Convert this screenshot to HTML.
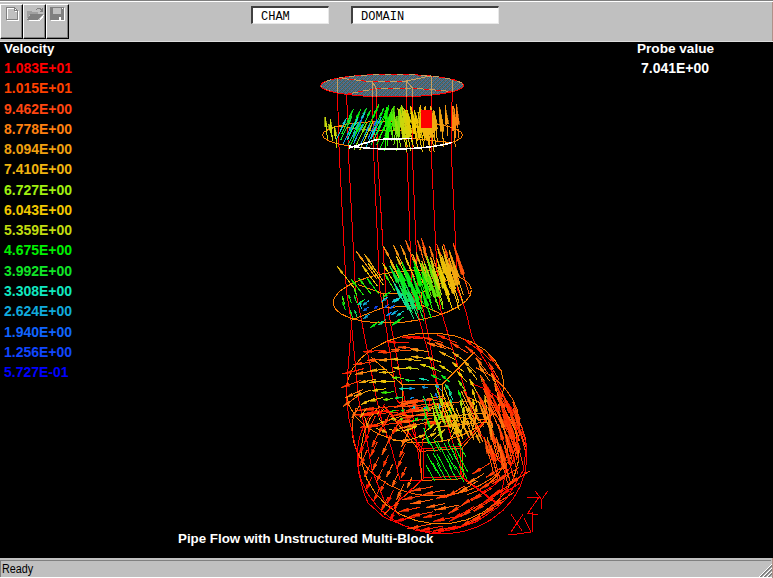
<!DOCTYPE html>
<html><head><meta charset="utf-8">
<style>
html,body{margin:0;padding:0;background:#000;}
body{width:773px;height:578px;position:relative;overflow:hidden;font-family:"Liberation Sans",sans-serif;}
#tb{position:absolute;left:0;top:0;width:773px;height:42px;background:#c0c0c0;}
#tb .l1{position:absolute;left:0;top:0;width:773px;height:1px;background:#808080;}
#tb .l2{position:absolute;left:0;top:1px;width:773px;height:1px;background:#fff;}
.btn{position:absolute;top:4px;width:23px;height:35px;background:#c0c0c0;box-sizing:border-box;border-left:1px solid #fff;border-top:1px solid #fff;border-right:1px solid #000;border-bottom:1px solid #000;box-shadow:inset -1px -1px 0 #808080;}
.btn svg{position:absolute;left:-1px;top:-1px;}
#tb .l3{position:absolute;left:0;top:41px;width:773px;height:1px;background:#dcdcdc;}
.fld{position:absolute;top:6px;height:18px;background:#fff;box-sizing:border-box;border-top:2px solid #404040;border-left:2px solid #404040;border-right:1px solid #e8e8e8;border-bottom:1px solid #e8e8e8;font-family:"Liberation Mono",monospace;font-size:12px;line-height:15px;padding-top:2px;color:#000;padding-left:8px;white-space:pre;}
.lg.n{font-size:14px;}
.lg{position:absolute;left:4px;font-weight:bold;font-size:13.33px;line-height:16px;white-space:pre;}
#sb{position:absolute;left:0;top:558px;width:773px;height:20px;background:#c0c0c0;}
#sb .d{position:absolute;left:0;top:2px;width:771px;height:1px;background:#808080;}
#sb .w{position:absolute;left:0;top:19px;width:773px;height:1px;background:#fff;}
#sb .t{position:absolute;left:2px;top:5px;font-size:12px;line-height:13px;color:#000;transform:scaleX(0.9);transform-origin:0 0;}
#sb .le{position:absolute;left:0;top:3px;width:1px;height:16px;background:#808080;}
#sb .re{position:absolute;left:772px;top:0;width:1px;height:20px;background:#b09088;}
</style></head><body>
<div id="tb"><div class="l1"></div><div class="l2"></div><div style="position:absolute;left:772px;top:2px;width:1px;height:40px;background:#b09088"></div>
<div class="l3"></div>
<div class="btn" style="left:0"><svg width="23" height="35" viewBox="0 4 23 35" shape-rendering="crispEdges">
<path d="M7.5 8.5 H15.5 L18.5 11.5 V20.5 H7.5 Z M15.5 8.5 V11.5 H18.5" fill="none" stroke="#fff"/>
<path d="M6.5 7.5 H14.5 L17.5 10.5 V19.5 H6.5 Z M14.5 7.5 V10.5 H17.5" fill="none" stroke="#808080"/>
</svg></div>
<div class="btn" style="left:23px"><svg width="23" height="35" viewBox="23 4 23 35" shape-rendering="crispEdges">
<path d="M28.5 20.5 H39.5 L44 15" fill="none" stroke="#fff"/>
<path d="M27 11 H31 L32 12 H38 V14 H30.5 L27 19 Z" fill="#a0a0a0"/>
<path d="M30.5 14 H43 L38.5 19.5 H27 Z" fill="#808080"/>
<path d="M36.5 9.5 Q39.5 7 42 10.5 M42.5 8 V11.5 H39.5" fill="none" stroke="#808080"/>
</svg></div>
<div class="btn" style="left:46px"><svg width="23" height="35" viewBox="46 4 23 35" shape-rendering="crispEdges">
<rect x="51" y="8" width="14" height="13" fill="#fff"/>
<rect x="50" y="7" width="14" height="13" fill="#808080"/>
<rect x="53" y="8" width="8" height="6" fill="#c0c0c0"/>
<rect x="59" y="17" width="2" height="3" fill="#fff"/>
<rect x="62" y="8" width="1" height="1" fill="#fff"/>
</svg></div>
<div class="fld" style="left:251px;width:78px">CHAM</div>
<div class="fld" style="left:351px;width:148px">DOMAIN</div>
</div>
<svg id="plot" style="position:absolute;left:0;top:42px" width="773" height="516" viewBox="0 42 773 516" shape-rendering="crispEdges"><!--PLOT-->
<defs><pattern id="dth" width="4" height="4" patternUnits="userSpaceOnUse"><rect width="4" height="4" fill="#306868"/><rect x="0" y="0" width="1" height="1" fill="#706060"/><rect x="2" y="0" width="1" height="1" fill="#5070a0"/><rect x="1" y="1" width="1" height="1" fill="#5070a0"/><rect x="3" y="1" width="1" height="1" fill="#706060"/><rect x="0" y="2" width="1" height="1" fill="#5070a0"/><rect x="2" y="2" width="1" height="1" fill="#706060"/><rect x="1" y="3" width="1" height="1" fill="#706060"/><rect x="3" y="3" width="1" height="1" fill="#5070a0"/><rect x="1" y="0" width="1" height="1" fill="#606878"/><rect x="3" y="2" width="1" height="1" fill="#606878"/></pattern></defs>
<path d="M463.8 85.6 L462 88.1 L456.7 90.5 L448.2 92.7 L436.8 94.5 L423.2 95.9 L408.1 96.7 L392.1 97 L376.1 96.7 L361 95.9 L347.4 94.5 L336 92.7 L327.5 90.5 L322.2 88.1 L320.4 85.6 L322.2 83.1 L327.5 80.7 L336 78.5 L347.4 76.7 L361 75.3 L376.1 74.5 L392.1 74.2 L408.1 74.5 L423.2 75.3 L436.8 76.7 L448.2 78.5 L456.7 80.7 L462 83.1 L463.8 85.6Z" fill="url(#dth)" stroke="#c8a060" stroke-width="1"/>
<path d="M463.5 84.6 L463.6 86.5 L461.7 88.4 L457.9 90.1 L452.2 91.8 L445 93.3 L436.2 94.6 L426.3 95.6 L415.4 96.4 L403.9 96.8 L392.1 97 L380.3 96.8 L368.8 96.4 L357.9 95.6 L348 94.6 L339.2 93.3 L332 91.8 L326.3 90.1 L322.5 88.4 L320.6 86.5 L320.7 84.6" stroke="#ff0000" stroke-width="1" fill="none"/>
<path d="M320.7 84.6 L322.4 82.9 L325.6 81.3 L330.3 79.8 L336.4 78.4 L343.7 77.2 L352 76.1 L361.2 75.3 L371.1 74.7 L381.5 74.3 L392.1 74.2 L402.7 74.3 L413.1 74.7 L423 75.3 L432.2 76.1 L440.5 77.2 L447.8 78.4 L453.9 79.8 L458.6 81.3 L461.8 82.9 L463.5 84.6" stroke="#ff0000" stroke-width="1" fill="none" stroke-dasharray="6 6"/>
<path d="M337.5 77.9 L372.6 82" stroke="#c8a060" stroke-width="1" fill="none"/>
<path d="M346.7 94.2 L376.5 88.5" stroke="#c8a060" stroke-width="1" fill="none"/>
<path d="M452.2 91.6 L412.3 88" stroke="#c8a060" stroke-width="1" fill="none"/>
<path d="M431.4 75.7 L406.6 81" stroke="#c8a060" stroke-width="1" fill="none"/>
<path d="M372.6 82 L376.5 88.5" stroke="#c8a060" stroke-width="1" fill="none"/>
<path d="M376.5 88.5 L412.3 88" stroke="#c8a060" stroke-width="1" fill="none"/>
<path d="M412.3 88 L406.6 81" stroke="#c8a060" stroke-width="1" fill="none"/>
<path d="M406.6 81 L372.6 82" stroke="#c8a060" stroke-width="1" fill="none"/>
<path d="M337.5 77.9 L372.6 82" stroke="#ff0000" stroke-width="1" fill="none" stroke-dasharray="5 7"/>
<path d="M372.6 82 L406.6 81" stroke="#ff0000" stroke-width="1" fill="none" stroke-dasharray="5 7"/>
<path d="M346.7 94.2 L376.5 88.5" stroke="#ff0000" stroke-width="1" fill="none" stroke-dasharray="5 7"/>
<path d="M376.5 88.5 L412.3 88" stroke="#ff0000" stroke-width="1" fill="none" stroke-dasharray="5 7"/>
<path d="M412.3 88 L452.2 91.6" stroke="#ff0000" stroke-width="1" fill="none" stroke-dasharray="5 7"/>
<path d="M337.5 78 L337.5 94" stroke="#c8a060" stroke-width="1" fill="none"/>
<path d="M372.6 82 L372.6 97" stroke="#c8a060" stroke-width="1" fill="none"/>
<path d="M376.5 88 L376.5 97" stroke="#c8a060" stroke-width="1" fill="none"/>
<path d="M406.6 81 L406.6 97" stroke="#c8a060" stroke-width="1" fill="none"/>
<path d="M412.3 88 L412.3 97" stroke="#c8a060" stroke-width="1" fill="none"/>
<path d="M431.4 76 L431.4 96" stroke="#c8a060" stroke-width="1" fill="none"/>
<path d="M452.2 80 L452.2 92" stroke="#c8a060" stroke-width="1" fill="none"/>
<path d="M337.5 93 L339.1 150 L346.3 290 L351 320 L358.8 400 L365 430 L372 470" stroke="#ff0000" stroke-width="1" fill="none"/>
<path d="M346.7 94 L348.3 150 L355.5 290 L361.4 320 L376.7 400 L381.4 419 L392 450" stroke="#ff0000" stroke-width="1" fill="none"/>
<path d="M372.6 97 L373.5 150 L379.8 290 L385 320 L397 400 L404 409.5 L421 452" stroke="#ff0000" stroke-width="1" fill="none"/>
<path d="M376.5 97 L377.3 150 L385.6 290 L390 320 L404.7 400 L412 411 L422 480" stroke="#ff0000" stroke-width="1" fill="none"/>
<path d="M406.6 97 L406.9 150 L411.7 290 L419.5 320 L434.7 377 L441 400 L462 445" stroke="#ff0000" stroke-width="1" fill="none"/>
<path d="M412.3 97 L412.2 150 L417.8 290 L423.4 310 L440.5 400 L463 478" stroke="#ff0000" stroke-width="1" fill="none"/>
<path d="M431.4 96 L431.1 150 L437.9 290 L440.8 310 L462 380 L478 430" stroke="#ff0000" stroke-width="1" fill="none"/>
<path d="M452.2 92 L451.2 150 L457.8 290 L465.5 310 L472 337 L481.4 355 L492.3 372 L506 400 L512.5 409.6 L521.8 426.7 L526.5 445 L523.4 470 L517 481 L507.8 496.7 L498.5 506.8 L476.7 521.6 L453.3 529.4 L430 533.3" stroke="#ff0000" stroke-width="1" fill="none"/>
<path d="M462.7 135 L460.9 138.1 L455.7 141.1 L447.4 143.7 L436.3 145.9 L423 147.6 L408.1 148.6 L392.5 149 L376.9 148.6 L362 147.6 L348.7 145.9 L337.6 143.7 L329.3 141.1 L324.1 138.1 L322.3 135 L324.1 131.9 L329.3 128.9 L337.6 126.3 L348.7 124.1 L362 122.4 L376.9 121.4 L392.5 121 L408.1 121.4 L423 122.4 L436.3 124.1 L447.4 126.3 L455.7 128.9 L460.9 131.9 L462.7 135" stroke="#ff8000" stroke-width="1" fill="none"/>
<path d="M338.7 126 L373.3 131" stroke="#ff8000" stroke-width="1" fill="none"/>
<path d="M349 148 L377.1 139.5" stroke="#ff8000" stroke-width="1" fill="none"/>
<path d="M451.8 142.7 L412.3 138.4" stroke="#ff8000" stroke-width="1" fill="none"/>
<path d="M431.2 123.5 L406.8 130" stroke="#ff8000" stroke-width="1" fill="none"/>
<path d="M373.3 131 L377.1 139.5 L412.3 138.4 L406.8 130 L373.3 131" stroke="#ff8000" stroke-width="1" fill="none"/>
<path d="M390 129 L392.2 108.4" stroke="#4ae806" stroke-width="1" fill="none"/>
<path d="M392.6 118.9 L392.2 108.4 L389.6 118.6Z" fill="#4ae806" stroke="#4ae806" stroke-width="0.6"/>
<path d="M418.3 130.2 L414.3 109.6" stroke="#f0c701" stroke-width="1" fill="none"/>
<path d="M418.4 121.6 L414.3 109.6 L414.9 122.3Z" fill="#f0c701" stroke="#f0c701" stroke-width="0.6"/>
<path d="M377.8 129 L389.2 104.6" stroke="#01ef03" stroke-width="1" fill="none"/>
<path d="M386.7 112.3 L389.2 104.6 L384.9 111.5Z" fill="#01ef03" stroke="#01ef03" stroke-width="0.6"/>
<path d="M361.8 128.8 L370.6 110" stroke="#0ee724" stroke-width="1" fill="none"/>
<path d="M368.8 116.1 L370.6 110 L367 115.2Z" fill="#0ee724" stroke="#0ee724" stroke-width="0.6"/>
<path d="M367 129.7 L378.8 104.5" stroke="#29ec03" stroke-width="1" fill="none"/>
<path d="M376.2 112.4 L378.8 104.5 L374.3 111.6Z" fill="#29ec03" stroke="#29ec03" stroke-width="0.6"/>
<path d="M411.2 130.7 L406.9 110" stroke="#d9d107" stroke-width="1" fill="none"/>
<path d="M411.3 122.1 L406.9 110 L407.7 122.8Z" fill="#d9d107" stroke="#d9d107" stroke-width="0.6"/>
<path d="M384.5 130.7 L387 107.2" stroke="#1eed02" stroke-width="1" fill="none"/>
<path d="M387.3 119.1 L387 107.2 L384.3 118.8Z" fill="#1eed02" stroke="#1eed02" stroke-width="0.6"/>
<path d="M429.1 131.8 L425 106.4" stroke="#f0b410" stroke-width="1" fill="none"/>
<path d="M429.2 121.4 L425 106.4 L425.7 121.9Z" fill="#f0b410" stroke="#f0b410" stroke-width="0.6"/>
<path d="M356.3 130 L366.6 107.9" stroke="#10e532" stroke-width="1" fill="none"/>
<path d="M364.4 114.9 L366.6 107.9 L362.6 114.1Z" fill="#10e532" stroke="#10e532" stroke-width="0.6"/>
<path d="M436.8 132.2 L433.9 110.5" stroke="#f0aa10" stroke-width="1" fill="none"/>
<path d="M437.5 123.3 L433.9 110.5 L433.9 123.8Z" fill="#f0aa10" stroke="#f0aa10" stroke-width="0.6"/>
<path d="M398.7 131 L401.3 105.9" stroke="#8ee10c" stroke-width="1" fill="none"/>
<path d="M401.5 118.6 L401.3 105.9 L398.5 118.3Z" fill="#8ee10c" stroke="#8ee10c" stroke-width="0.6"/>
<path d="M407 131.6 L401.5 104.9" stroke="#cad70c" stroke-width="1" fill="none"/>
<path d="M406.5 120.5 L401.5 104.9 L403 121.3Z" fill="#cad70c" stroke="#cad70c" stroke-width="0.6"/>
<path d="M355.1 133 L365.1 111.6" stroke="#10c1d3" stroke-width="1" fill="none"/>
<path d="M363 118.4 L365.1 111.6 L361.2 117.6Z" fill="#10c1d3" stroke="#10c1d3" stroke-width="0.6"/>
<path d="M377 133.7 L389.2 107.6" stroke="#02ef04" stroke-width="1" fill="none"/>
<path d="M386.5 115.8 L389.2 107.6 L384.6 115Z" fill="#02ef04" stroke="#02ef04" stroke-width="0.6"/>
<path d="M371.9 133.5 L383.5 108.5" stroke="#0aea1a" stroke-width="1" fill="none"/>
<path d="M380.9 116.4 L383.5 108.5 L379.1 115.6Z" fill="#0aea1a" stroke="#0aea1a" stroke-width="0.6"/>
<path d="M425.2 135.6 L420 105.1" stroke="#efb70e" stroke-width="1" fill="none"/>
<path d="M424.9 123.1 L420 105.1 L421.4 123.7Z" fill="#efb70e" stroke="#efb70e" stroke-width="0.6"/>
<path d="M341.7 134.1 L353.3 109.3" stroke="#0ce91e" stroke-width="1" fill="none"/>
<path d="M350.7 117.2 L353.3 109.3 L348.9 116.3Z" fill="#0ce91e" stroke="#0ce91e" stroke-width="0.6"/>
<path d="M448.1 136.4 L445.1 105.4" stroke="#f49810" stroke-width="1" fill="none"/>
<path d="M448.7 123.8 L445.1 105.4 L445.1 124.2Z" fill="#f49810" stroke="#f49810" stroke-width="0.6"/>
<path d="M435 136.7 L430.8 106.2" stroke="#f0ad10" stroke-width="1" fill="none"/>
<path d="M435.1 124.2 L430.8 106.2 L431.5 124.7Z" fill="#f0ad10" stroke="#f0ad10" stroke-width="0.6"/>
<path d="M398 135.6 L401.2 106.1" stroke="#89e20c" stroke-width="1" fill="none"/>
<path d="M401.1 121 L401.2 106.1 L398.1 120.7Z" fill="#89e20c" stroke="#89e20c" stroke-width="0.6"/>
<path d="M442.9 137 L439.8 109.3" stroke="#f0a210" stroke-width="1" fill="none"/>
<path d="M443.4 125.7 L439.8 109.3 L439.9 126.1Z" fill="#f0a210" stroke="#f0a210" stroke-width="0.6"/>
<path d="M391 135.7 L394.1 106" stroke="#51e707" stroke-width="1" fill="none"/>
<path d="M394.1 121 L394.1 106 L391.1 120.7Z" fill="#51e707" stroke="#51e707" stroke-width="0.6"/>
<path d="M430.3 137 L425.7 107.5" stroke="#f0b310" stroke-width="1" fill="none"/>
<path d="M430.2 124.9 L425.7 107.5 L426.6 125.5Z" fill="#f0b310" stroke="#f0b310" stroke-width="0.6"/>
<path d="M348.7 135.3 L360.7 109.4" stroke="#03ee08" stroke-width="1" fill="none"/>
<path d="M358 117.6 L360.7 109.4 L356.2 116.8Z" fill="#03ee08" stroke="#03ee08" stroke-width="0.6"/>
<path d="M456 137.6 L453.8 106.4" stroke="#fc8710" stroke-width="1" fill="none"/>
<path d="M456.9 125 L453.8 106.4 L453.3 125.2Z" fill="#fc8710" stroke="#fc8710" stroke-width="0.6"/>
<path d="M364.4 135.6 L376.5 109.6" stroke="#02ef04" stroke-width="1" fill="none"/>
<path d="M373.8 117.8 L376.5 109.6 L372 117Z" fill="#02ef04" stroke="#02ef04" stroke-width="0.6"/>
<path d="M416.4 136.8 L410.2 105.8" stroke="#ecc901" stroke-width="1" fill="none"/>
<path d="M415.7 124 L410.2 105.8 L412.1 124.7Z" fill="#ecc901" stroke="#ecc901" stroke-width="0.6"/>
<path d="M458.6 137.9 L456.5 104.1" stroke="#fe8110" stroke-width="1" fill="none"/>
<path d="M459.5 124.3 L456.5 104.1 L455.9 124.5Z" fill="#fe8110" stroke="#fe8110" stroke-width="0.6"/>
<path d="M405.3 136.7 L399.6 109.1" stroke="#c4da0e" stroke-width="1" fill="none"/>
<path d="M404.8 125.3 L399.6 109.1 L401.3 126Z" fill="#c4da0e" stroke="#c4da0e" stroke-width="0.6"/>
<path d="M409.8 136.8 L403.8 107.9" stroke="#d4d309" stroke-width="1" fill="none"/>
<path d="M409.2 124.9 L403.8 107.9 L405.6 125.6Z" fill="#d4d309" stroke="#d4d309" stroke-width="0.6"/>
<path d="M352.9 137.9 L361.9 118.6" stroke="#1081e8" stroke-width="1" fill="none"/>
<path d="M360.1 124.8 L361.9 118.6 L358.3 124Z" fill="#1081e8" stroke="#1081e8" stroke-width="0.6"/>
<path d="M404.3 140 L397.7 107.7" stroke="#c0db0f" stroke-width="1" fill="none"/>
<path d="M403.4 126.7 L397.7 107.7 L399.9 127.5Z" fill="#c0db0f" stroke="#c0db0f" stroke-width="0.6"/>
<path d="M437.4 140.9 L433.4 110.5" stroke="#f0a910" stroke-width="1" fill="none"/>
<path d="M437.6 128.5 L433.4 110.5 L434 129Z" fill="#f0a910" stroke="#f0a910" stroke-width="0.6"/>
<path d="M378.6 139.1 L390.8 112.9" stroke="#01f001" stroke-width="1" fill="none"/>
<path d="M388 121.2 L390.8 112.9 L386.2 120.4Z" fill="#01f001" stroke="#01f001" stroke-width="0.6"/>
<path d="M371.2 138.6 L381.1 117.4" stroke="#10bdd4" stroke-width="1" fill="none"/>
<path d="M379.1 124.2 L381.1 117.4 L377.3 123.3Z" fill="#10bdd4" stroke="#10bdd4" stroke-width="0.6"/>
<path d="M368 138.6 L377 119.4" stroke="#107de9" stroke-width="1" fill="none"/>
<path d="M375.2 125.6 L377 119.4 L373.4 124.8Z" fill="#107de9" stroke="#107de9" stroke-width="0.6"/>
<path d="M424.9 141.4 L419 107.5" stroke="#edc305" stroke-width="1" fill="none"/>
<path d="M424.3 127.5 L419 107.5 L420.8 128.1Z" fill="#edc305" stroke="#edc305" stroke-width="0.6"/>
<path d="M340.9 139.8 L352.2 115.6" stroke="#10e62b" stroke-width="1" fill="none"/>
<path d="M349.7 123.3 L352.2 115.6 L347.9 122.4Z" fill="#10e62b" stroke="#10e62b" stroke-width="0.6"/>
<path d="M417.7 141.3 L411.1 107.4" stroke="#f0c800" stroke-width="1" fill="none"/>
<path d="M416.8 127.4 L411.1 107.4 L413.3 128.1Z" fill="#f0c800" stroke="#f0c800" stroke-width="0.6"/>
<path d="M429.8 141.9 L424.4 107.5" stroke="#f0b410" stroke-width="1" fill="none"/>
<path d="M429.4 127.9 L424.4 107.5 L425.8 128.4Z" fill="#f0b410" stroke="#f0b410" stroke-width="0.6"/>
<path d="M336.4 139.6 L346.5 117.8" stroke="#10cdce" stroke-width="1" fill="none"/>
<path d="M344.4 124.7 L346.5 117.8 L342.6 123.9Z" fill="#10cdce" stroke="#10cdce" stroke-width="0.6"/>
<path d="M396.4 140.8 L399.5 111" stroke="#7ce30a" stroke-width="1" fill="none"/>
<path d="M399.4 126.1 L399.5 111 L396.5 125.8Z" fill="#7ce30a" stroke="#7ce30a" stroke-width="0.6"/>
<path d="M347.4 139.8 L357.8 117.5" stroke="#10dcc7" stroke-width="1" fill="none"/>
<path d="M355.6 124.6 L357.8 117.5 L353.8 123.8Z" fill="#10dcc7" stroke="#10dcc7" stroke-width="0.6"/>
<path d="M412 141.9 L405.3 109.8" stroke="#dcd006" stroke-width="1" fill="none"/>
<path d="M411.1 128.7 L405.3 109.8 L407.5 129.5Z" fill="#dcd006" stroke="#dcd006" stroke-width="0.6"/>
<path d="M391.8 141.5 L394.9 111.6" stroke="#58e707" stroke-width="1" fill="none"/>
<path d="M394.9 126.7 L394.9 111.6 L391.9 126.4Z" fill="#58e707" stroke="#58e707" stroke-width="0.6"/>
<path d="M332.6 139.3 L328.7 123.8" stroke="#c1db0f" stroke-width="1" fill="none"/>
<path d="M331.4 129.7 L328.7 123.8 L329.1 130.3Z" fill="#c1db0f" stroke="#c1db0f" stroke-width="0.6"/>
<path d="M443.6 142.9 L439.6 106.8" stroke="#f0a110" stroke-width="1" fill="none"/>
<path d="M443.8 128.3 L439.6 106.8 L440.2 128.7Z" fill="#f0a110" stroke="#f0a110" stroke-width="0.6"/>
<path d="M387.2 141.6 L390.4 111.7" stroke="#33eb04" stroke-width="1" fill="none"/>
<path d="M390.3 126.8 L390.4 111.7 L387.3 126.5Z" fill="#33eb04" stroke="#33eb04" stroke-width="0.6"/>
<path d="M435.8 145.9 L430.5 107.8" stroke="#f0ac10" stroke-width="1" fill="none"/>
<path d="M435.5 130.5 L430.5 107.8 L431.9 130.9Z" fill="#f0ac10" stroke="#f0ac10" stroke-width="0.6"/>
<path d="M455.2 146.7 L452.2 106.2" stroke="#fb8910" stroke-width="1" fill="none"/>
<path d="M455.8 130.4 L452.2 106.2 L452.2 130.7Z" fill="#fb8910" stroke="#fb8910" stroke-width="0.6"/>
<path d="M343.2 143.8 L352.7 123.5" stroke="#10a0e0" stroke-width="1" fill="none"/>
<path d="M350.7 130 L352.7 123.5 L348.9 129.1Z" fill="#10a0e0" stroke="#10a0e0" stroke-width="0.6"/>
<path d="M393.9 145.4 L397.1 115.5" stroke="#69e509" stroke-width="1" fill="none"/>
<path d="M397 130.6 L397.1 115.5 L394 130.3Z" fill="#69e509" stroke="#69e509" stroke-width="0.6"/>
<path d="M353.4 144 L362.9 123.7" stroke="#10a0e0" stroke-width="1" fill="none"/>
<path d="M360.9 130.2 L362.9 123.7 L359.1 129.4Z" fill="#10a0e0" stroke="#10a0e0" stroke-width="0.6"/>
<path d="M443.9 146.8 L439.6 107.7" stroke="#f0a110" stroke-width="1" fill="none"/>
<path d="M444 131 L439.6 107.7 L440.4 131.4Z" fill="#f0a110" stroke="#f0a110" stroke-width="0.6"/>
<path d="M376.4 145.2 L388.8 118.7" stroke="#1ced02" stroke-width="1" fill="none"/>
<path d="M386 127.1 L388.8 118.7 L384.2 126.2Z" fill="#1ced02" stroke="#1ced02" stroke-width="0.6"/>
<path d="M424 146.5 L417.9 111.8" stroke="#eec305" stroke-width="1" fill="none"/>
<path d="M423.3 132.3 L417.9 111.8 L419.8 132.9Z" fill="#eec305" stroke="#eec305" stroke-width="0.6"/>
<path d="M360.5 144.4 L369.9 124.4" stroke="#1098e2" stroke-width="1" fill="none"/>
<path d="M368 130.8 L369.9 124.4 L366.2 129.9Z" fill="#1098e2" stroke="#1098e2" stroke-width="0.6"/>
<path d="M430.1 147.2 L424.2 109.8" stroke="#f0b310" stroke-width="1" fill="none"/>
<path d="M429.5 132 L424.2 109.8 L425.9 132.5Z" fill="#f0b310" stroke="#f0b310" stroke-width="0.6"/>
<path d="M400.8 146.5 L394.2 114.7" stroke="#95e00d" stroke-width="1" fill="none"/>
<path d="M399.9 133.4 L394.2 114.7 L396.4 134.1Z" fill="#95e00d" stroke="#95e00d" stroke-width="0.6"/>
<path d="M407.4 146.8 L400.7 114.1" stroke="#ccd70c" stroke-width="1" fill="none"/>
<path d="M406.5 133.4 L400.7 114.1 L403 134.1Z" fill="#ccd70c" stroke="#ccd70c" stroke-width="0.6"/>
<path d="M387.2 146.4 L390.4 116.5" stroke="#33eb04" stroke-width="1" fill="none"/>
<path d="M390.3 131.6 L390.4 116.5 L387.3 131.3Z" fill="#33eb04" stroke="#33eb04" stroke-width="0.6"/>
<path d="M413.4 146.9 L406.5 113.6" stroke="#e1ce05" stroke-width="1" fill="none"/>
<path d="M412.4 133.2 L406.5 113.6 L408.9 133.9Z" fill="#e1ce05" stroke="#e1ce05" stroke-width="0.6"/>
<path d="M347.9 145.5 L358.9 122.1" stroke="#10e270" stroke-width="1" fill="none"/>
<path d="M356.5 129.5 L358.9 122.1 L354.7 128.7Z" fill="#10e270" stroke="#10e270" stroke-width="0.6"/>
<path d="M370.9 145.5 L382 121.7" stroke="#10e44e" stroke-width="1" fill="none"/>
<path d="M379.6 129.3 L382 121.7 L377.8 128.5Z" fill="#10e44e" stroke="#10e44e" stroke-width="0.6"/>
<path d="M417.6 147.2 L410.9 113.3" stroke="#f0c800" stroke-width="1" fill="none"/>
<path d="M416.7 133.3 L410.9 113.3 L413.2 134Z" fill="#f0c800" stroke="#f0c800" stroke-width="0.6"/>
<path d="M348.7 149.3 L360.7 123.5" stroke="#04ee0a" stroke-width="1" fill="none"/>
<path d="M358 131.6 L360.7 123.5 L356.2 130.8Z" fill="#04ee0a" stroke="#04ee0a" stroke-width="0.6"/>
<path d="M365.3 148.9 L375.5 127" stroke="#10d0cd" stroke-width="1" fill="none"/>
<path d="M373.4 134 L375.5 127 L371.6 133.2Z" fill="#10d0cd" stroke="#10d0cd" stroke-width="0.6"/>
<path d="M379.3 149.8 L391.5 123.5" stroke="#00f000" stroke-width="1" fill="none"/>
<path d="M388.8 131.8 L391.5 123.5 L386.9 131Z" fill="#00f000" stroke="#00f000" stroke-width="0.6"/>
<path d="M410.8 150.9 L404 117.8" stroke="#d8d208" stroke-width="1" fill="none"/>
<path d="M409.8 137.3 L404 117.8 L406.3 138Z" fill="#d8d208" stroke="#d8d208" stroke-width="0.6"/>
<path d="M359.6 150.3 L372.9 121.9" stroke="#c4da0e" stroke-width="1" fill="none"/>
<path d="M369.8 130.8 L372.9 121.9 L368 130Z" fill="#c4da0e" stroke="#c4da0e" stroke-width="0.6"/>
<path d="M430.1 151.9 L424.3 114.5" stroke="#f0b310" stroke-width="1" fill="none"/>
<path d="M429.6 136.7 L424.3 114.5 L426 137.2Z" fill="#f0b310" stroke="#f0b310" stroke-width="0.6"/>
<path d="M384.8 150.9 L387.9 121" stroke="#20ed03" stroke-width="1" fill="none"/>
<path d="M387.8 136.1 L387.9 121 L384.9 135.8Z" fill="#20ed03" stroke="#20ed03" stroke-width="0.6"/>
<path d="M353.7 150.6 L366.6 123.1" stroke="#78e30a" stroke-width="1" fill="none"/>
<path d="M363.6 131.8 L366.6 123.1 L361.8 130.9Z" fill="#78e30a" stroke="#78e30a" stroke-width="0.6"/>
<path d="M422.3 151.7 L416.1 117.2" stroke="#eec404" stroke-width="1" fill="none"/>
<path d="M421.6 137.6 L416.1 117.2 L418 138.2Z" fill="#eec404" stroke="#eec404" stroke-width="0.6"/>
<path d="M434.2 152.4 L428.9 114.5" stroke="#f0ae10" stroke-width="1" fill="none"/>
<path d="M433.9 137 L428.9 114.5 L430.3 137.5Z" fill="#f0ae10" stroke="#f0ae10" stroke-width="0.6"/>
<path d="M396.8 151.5 L399.9 121.7" stroke="#7fe30b" stroke-width="1" fill="none"/>
<path d="M399.8 136.7 L399.9 121.7 L396.9 136.4Z" fill="#7fe30b" stroke="#7fe30b" stroke-width="0.6"/>
<path d="M407.1 152.3 L400.4 119.8" stroke="#cad70c" stroke-width="1" fill="none"/>
<path d="M406.2 138.9 L400.4 119.8 L402.6 139.7Z" fill="#cad70c" stroke="#cad70c" stroke-width="0.6"/>
<path d="M327.5 139 L325 117" stroke="#c8d80d" stroke-width="1" fill="none"/>
<path d="M327.3 126.8 L325 117 L324.9 127Z" fill="#c8d80d" stroke="#c8d80d" stroke-width="0.6"/>
<path d="M332.7 141 L330.2 119" stroke="#c8d80d" stroke-width="1" fill="none"/>
<path d="M332.5 128.8 L330.2 119 L330.1 129Z" fill="#c8d80d" stroke="#c8d80d" stroke-width="0.6"/>
<path d="M337 148 L334.5 126" stroke="#c8d80d" stroke-width="1" fill="none"/>
<path d="M336.8 135.8 L334.5 126 L334.4 136Z" fill="#c8d80d" stroke="#c8d80d" stroke-width="0.6"/>
<path d="M452 142.4 L447.2 143.8 L441.5 145 L435.2 146.1 L428.2 147.1 L420.7 147.8 L412.9 148.4 L404.7 148.8 L396.3 149 L388 149 L379.6 148.8 L371.5 148.4 L363.6 147.8 L356.2 147 L349.3 146" stroke="#ffffff" stroke-width="1.6" fill="none"/>
<path d="M349 148 L377.1 139.5 L412.3 138.4" stroke="#ffffff" stroke-width="1.6" fill="none"/>
<rect x="421" y="110" width="10.5" height="18" fill="#ff0000"/>
<path d="M421 128 L431.5 128 L427 141Z" fill="#f0b810" stroke="#f0b810" stroke-width="0.6"/>
<path d="M471.4 289.5 L470.3 295.3 L465.7 301.2 L458 306.8 L447.5 312 L434.7 316.4 L420.2 319.7 L404.9 322 L389.5 322.9 L374.7 322.6 L361.2 320.9 L349.9 318 L341.2 314 L335.5 309.2 L333.2 303.7 L334.3 297.9 L338.9 292 L346.6 286.4 L357.1 281.2 L369.9 276.8 L384.4 273.5 L399.7 271.2 L415.1 270.3 L429.9 270.6 L443.4 272.3 L454.7 275.2 L463.4 279.2 L469.1 284 L471.4 289.5" stroke="#ff8000" stroke-width="1" fill="none"/>
<path d="M358 284.6 L384 294" stroke="#ff8000" stroke-width="1" fill="none"/>
<path d="M351 320.3 L382 308" stroke="#ff8000" stroke-width="1" fill="none"/>
<path d="M441 314 L421.4 305" stroke="#ff8000" stroke-width="1" fill="none"/>
<path d="M454 277 L421.4 292.6" stroke="#ff8000" stroke-width="1" fill="none"/>
<path d="M384 294 L382 308 L421.4 305 L421.4 292.6 L384 294" stroke="#ff8000" stroke-width="1" fill="none"/>
<path d="M419.2 275.4 L405.5 240" stroke="#ff6a0e" stroke-width="1" fill="none"/>
<path d="M410.6 250.3 L405.5 240 L408.7 251Z" fill="#ff6a0e" stroke="#ff6a0e" stroke-width="0.6"/>
<path d="M433.2 275.8 L421.4 238.4" stroke="#ff500b" stroke-width="1" fill="none"/>
<path d="M425.9 249.4 L421.4 238.4 L424 250Z" fill="#ff500b" stroke="#ff500b" stroke-width="0.6"/>
<path d="M429 276.5 L417.4 239.9" stroke="#ff620d" stroke-width="1" fill="none"/>
<path d="M421.8 250.6 L417.4 239.9 L419.9 251.2Z" fill="#ff620d" stroke="#ff620d" stroke-width="0.6"/>
<path d="M408.4 277 L393.5 245.3" stroke="#f59410" stroke-width="1" fill="none"/>
<path d="M398.9 254.4 L393.5 245.3 L397.1 255.3Z" fill="#f59410" stroke="#f59410" stroke-width="0.6"/>
<path d="M414.3 277.2 L400.6 244.9" stroke="#f69310" stroke-width="1" fill="none"/>
<path d="M405.6 254.2 L400.6 244.9 L403.8 255Z" fill="#f69310" stroke="#f69310" stroke-width="0.6"/>
<path d="M400 277.3 L383.3 246.2" stroke="#f79110" stroke-width="1" fill="none"/>
<path d="M389.2 255 L383.3 246.2 L387.4 256Z" fill="#f79110" stroke="#f79110" stroke-width="0.6"/>
<path d="M377.1 279.3 L356.1 251.2" stroke="#f59510" stroke-width="1" fill="none"/>
<path d="M363.2 259.1 L356.1 251.2 L361.6 260.3Z" fill="#f59510" stroke="#f59510" stroke-width="0.6"/>
<path d="M433.8 281 L422.9 246.5" stroke="#fb8810" stroke-width="1" fill="none"/>
<path d="M427.1 256.6 L422.9 246.5 L425.2 257.2Z" fill="#fb8810" stroke="#fb8810" stroke-width="0.6"/>
<path d="M448.6 281.5 L436.8 244.1" stroke="#ff520b" stroke-width="1" fill="none"/>
<path d="M441.3 255 L436.8 244.1 L439.4 255.6Z" fill="#ff520b" stroke="#ff520b" stroke-width="0.6"/>
<path d="M440.6 281.3 L429.4 245.6" stroke="#ff750f" stroke-width="1" fill="none"/>
<path d="M433.7 256 L429.4 245.6 L431.8 256.6Z" fill="#ff750f" stroke="#ff750f" stroke-width="0.6"/>
<path d="M455.4 281.6 L443.6 244.2" stroke="#ff510b" stroke-width="1" fill="none"/>
<path d="M448.1 255.1 L443.6 244.2 L446.2 255.7Z" fill="#ff510b" stroke="#ff510b" stroke-width="0.6"/>
<path d="M382.8 280.6 L364.2 253.8" stroke="#f0aa10" stroke-width="1" fill="none"/>
<path d="M370.6 261.3 L364.2 253.8 L369 262.4Z" fill="#f0aa10" stroke="#f0aa10" stroke-width="0.6"/>
<path d="M426.3 282.6 L415.9 251.9" stroke="#f0ab10" stroke-width="1" fill="none"/>
<path d="M420 260.8 L415.9 251.9 L418.1 261.4Z" fill="#f0ab10" stroke="#f0ab10" stroke-width="0.6"/>
<path d="M408.9 282.8 L396.4 256.1" stroke="#edba0d" stroke-width="1" fill="none"/>
<path d="M401.1 263.7 L396.4 256.1 L399.3 264.5Z" fill="#edba0d" stroke="#edba0d" stroke-width="0.6"/>
<path d="M423.4 283.9 L412.6 254" stroke="#f0b010" stroke-width="1" fill="none"/>
<path d="M416.8 262.6 L412.6 254 L414.9 263.3Z" fill="#f0b010" stroke="#f0b010" stroke-width="0.6"/>
<path d="M416.4 284 L405 256.4" stroke="#eeb90d" stroke-width="1" fill="none"/>
<path d="M409.4 264.3 L405 256.4 L407.5 265.1Z" fill="#eeb90d" stroke="#eeb90d" stroke-width="0.6"/>
<path d="M466.9 285.9 L454.3 246" stroke="#ff3703" stroke-width="1" fill="none"/>
<path d="M459 257.7 L454.3 246 L457.1 258.3Z" fill="#ff3703" stroke="#ff3703" stroke-width="0.6"/>
<path d="M460.4 286.3 L448.9 249.7" stroke="#ff620d" stroke-width="1" fill="none"/>
<path d="M453.3 260.4 L448.9 249.7 L451.4 261Z" fill="#ff620d" stroke="#ff620d" stroke-width="0.6"/>
<path d="M383.4 285.2 L367.8 262.6" stroke="#edc107" stroke-width="1" fill="none"/>
<path d="M373.3 268.8 L367.8 262.6 L371.7 270Z" fill="#edc107" stroke="#edc107" stroke-width="0.6"/>
<path d="M395.6 285.4 L382.5 262.9" stroke="#efc602" stroke-width="1" fill="none"/>
<path d="M387.3 269.1 L382.5 262.9 L385.6 270.1Z" fill="#efc602" stroke="#efc602" stroke-width="0.6"/>
<path d="M402.9 285.6 L390.3 261.2" stroke="#ecc107" stroke-width="1" fill="none"/>
<path d="M395 268.1 L390.3 261.2 L393.2 269Z" fill="#ecc107" stroke="#ecc107" stroke-width="0.6"/>
<path d="M377.7 286.3 L361.7 264.9" stroke="#eec404" stroke-width="1" fill="none"/>
<path d="M367.3 270.7 L361.7 264.9 L365.7 271.9Z" fill="#eec404" stroke="#eec404" stroke-width="0.6"/>
<path d="M440.2 287.8 L430.4 256.6" stroke="#f0a910" stroke-width="1" fill="none"/>
<path d="M434.3 265.6 L430.4 256.6 L432.4 266.3Z" fill="#f0a910" stroke="#f0a910" stroke-width="0.6"/>
<path d="M455.6 289.1 L441.9 245.7" stroke="#f0b310" stroke-width="1" fill="none"/>
<path d="M451.9 271.1 L441.9 245.7 L448.3 272.3Z" fill="#f0b310" stroke="#f0b310" stroke-width="0.6"/>
<path d="M450.4 288.9 L437.8 248.9" stroke="#ecbf09" stroke-width="1" fill="none"/>
<path d="M447.1 272.3 L437.8 248.9 L443.5 273.4Z" fill="#ecbf09" stroke="#ecbf09" stroke-width="0.6"/>
<path d="M430.4 288.4 L421.8 261" stroke="#ecbc0b" stroke-width="1" fill="none"/>
<path d="M425.3 269 L421.8 261 L423.4 269.6Z" fill="#ecbc0b" stroke="#ecbc0b" stroke-width="0.6"/>
<path d="M437.3 289.4 L426.8 256.3" stroke="#68e509" stroke-width="1" fill="none"/>
<path d="M434.9 275.6 L426.8 256.3 L431.3 276.7Z" fill="#68e509" stroke="#68e509" stroke-width="0.6"/>
<path d="M354.6 288.7 L337.1 266.1" stroke="#ecbd0b" stroke-width="1" fill="none"/>
<path d="M343.2 272.3 L337.1 266.1 L341.6 273.5Z" fill="#ecbd0b" stroke="#ecbd0b" stroke-width="0.6"/>
<path d="M424.6 291.3 L413.6 260.5" stroke="#02ef05" stroke-width="1" fill="none"/>
<path d="M422 278.3 L413.6 260.5 L418.4 279.6Z" fill="#02ef05" stroke="#02ef05" stroke-width="0.6"/>
<path d="M469.3 294.4 L453.1 243" stroke="#ff530b" stroke-width="1" fill="none"/>
<path d="M464.7 273.3 L453.1 243 L461 274.4Z" fill="#ff530b" stroke="#ff530b" stroke-width="0.6"/>
<path d="M414.9 292.3 L402.1 262.6" stroke="#04ee0a" stroke-width="1" fill="none"/>
<path d="M411.5 279.7 L402.1 262.6 L408 281.2Z" fill="#04ee0a" stroke="#04ee0a" stroke-width="0.6"/>
<path d="M395 291.3 L384.6 273.6" stroke="#3bea05" stroke-width="1" fill="none"/>
<path d="M388.6 278.4 L384.6 273.6 L386.8 279.4Z" fill="#3bea05" stroke="#3bea05" stroke-width="0.6"/>
<path d="M409.4 292.7 L396 264.3" stroke="#08eb15" stroke-width="1" fill="none"/>
<path d="M405.8 280.5 L396 264.3 L402.3 282.1Z" fill="#08eb15" stroke="#08eb15" stroke-width="0.6"/>
<path d="M403.6 292.6 L389.9 266.3" stroke="#10e536" stroke-width="1" fill="none"/>
<path d="M399.8 281.2 L389.9 266.3 L396.4 282.9Z" fill="#10e536" stroke="#10e536" stroke-width="0.6"/>
<path d="M463.4 295.4 L449.1 249.9" stroke="#f0a410" stroke-width="1" fill="none"/>
<path d="M459.5 276.6 L449.1 249.9 L455.9 277.7Z" fill="#f0a410" stroke="#f0a410" stroke-width="0.6"/>
<path d="M454.3 294.8 L441.6 254.7" stroke="#ebbe0a" stroke-width="1" fill="none"/>
<path d="M451 278.2 L441.6 254.7 L447.4 279.4Z" fill="#ebbe0a" stroke="#ebbe0a" stroke-width="0.6"/>
<path d="M441.7 295 L430.9 260.5" stroke="#bddc10" stroke-width="1" fill="none"/>
<path d="M439.2 280.6 L430.9 260.5 L435.6 281.8Z" fill="#bddc10" stroke="#bddc10" stroke-width="0.6"/>
<path d="M391 291.2 L382.6 297.4" stroke="#0ce91d" stroke-width="1" fill="none"/>
<path d="M386.1 293.3 L382.6 297.4 L387.5 295.3Z" fill="#0ce91d" stroke="#0ce91d" stroke-width="0.6"/>
<path d="M378.4 293.6 L367.2 278.4" stroke="#04ed0b" stroke-width="1" fill="none"/>
<path d="M371.4 282.4 L367.2 278.4 L369.8 283.6Z" fill="#04ed0b" stroke="#04ed0b" stroke-width="0.6"/>
<path d="M448.7 295.9 L436.8 258.2" stroke="#efc701" stroke-width="1" fill="none"/>
<path d="M445.8 280.2 L436.8 258.2 L442.2 281.4Z" fill="#efc701" stroke="#efc701" stroke-width="0.6"/>
<path d="M431.2 295.8 L420.7 262.7" stroke="#6be509" stroke-width="1" fill="none"/>
<path d="M428.8 282 L420.7 262.7 L425.2 283.1Z" fill="#6be509" stroke="#6be509" stroke-width="0.6"/>
<path d="M371.2 294.2 L358.8 278.2" stroke="#2bec04" stroke-width="1" fill="none"/>
<path d="M363.3 282.4 L358.8 278.2 L361.7 283.6Z" fill="#2bec04" stroke="#2bec04" stroke-width="0.6"/>
<path d="M435.2 296.7 L424.4 262.6" stroke="#a4df0e" stroke-width="1" fill="none"/>
<path d="M432.7 282.5 L424.4 262.6 L429.1 283.6Z" fill="#a4df0e" stroke="#a4df0e" stroke-width="0.6"/>
<path d="M363.3 294.9 L351.1 279.1" stroke="#18ed02" stroke-width="1" fill="none"/>
<path d="M355.5 283.2 L351.1 279.1 L354 284.5Z" fill="#18ed02" stroke="#18ed02" stroke-width="0.6"/>
<path d="M415.5 297.5 L403.4 269.3" stroke="#0ce81f" stroke-width="1" fill="none"/>
<path d="M412.4 285.4 L403.4 269.3 L408.9 286.9Z" fill="#0ce81f" stroke="#0ce81f" stroke-width="0.6"/>
<path d="M425 298.1 L413.8 266.9" stroke="#04f000" stroke-width="1" fill="none"/>
<path d="M422.4 285 L413.8 266.9 L418.8 286.3Z" fill="#04f000" stroke="#04f000" stroke-width="0.6"/>
<path d="M356.9 296.1 L354 287.6" stroke="#45e906" stroke-width="1" fill="none"/>
<path d="M355.9 290.7 L354 287.6 L354.4 291.2Z" fill="#45e906" stroke="#45e906" stroke-width="0.6"/>
<path d="M410 298.1 L396.7 269.9" stroke="#0aea19" stroke-width="1" fill="none"/>
<path d="M406.4 286 L396.7 269.9 L403 287.6Z" fill="#0aea19" stroke="#0aea19" stroke-width="0.6"/>
<path d="M388.4 296.6 L381.7 301.5" stroke="#10bdd4" stroke-width="1" fill="none"/>
<path d="M384.4 298.1 L381.7 301.5 L385.8 300Z" fill="#10bdd4" stroke="#10bdd4" stroke-width="0.6"/>
<path d="M401.2 297 L394 302.2" stroke="#10d8ca" stroke-width="1" fill="none"/>
<path d="M396.9 298.6 L394 302.2 L398.3 300.6Z" fill="#10d8ca" stroke="#10d8ca" stroke-width="0.6"/>
<path d="M398.4 297.5 L391.7 302.4" stroke="#10bbd5" stroke-width="1" fill="none"/>
<path d="M394.3 299 L391.7 302.4 L395.7 300.9Z" fill="#10bbd5" stroke="#10bbd5" stroke-width="0.6"/>
<path d="M463 302.7 L448.9 257.9" stroke="#f0a910" stroke-width="1" fill="none"/>
<path d="M459.2 284.2 L448.9 257.9 L455.6 285.4Z" fill="#f0a910" stroke="#f0a910" stroke-width="0.6"/>
<path d="M459 302.7 L445.7 260.2" stroke="#efb70e" stroke-width="1" fill="none"/>
<path d="M455.5 285.1 L445.7 260.2 L451.9 286.3Z" fill="#efb70e" stroke="#efb70e" stroke-width="0.6"/>
<path d="M448.9 302.1 L437.7 266.5" stroke="#d2d409" stroke-width="1" fill="none"/>
<path d="M446.3 287.3 L437.7 266.5 L442.6 288.5Z" fill="#d2d409" stroke="#d2d409" stroke-width="0.6"/>
<path d="M365.2 299.2 L357.1 305" stroke="#10e449" stroke-width="1" fill="none"/>
<path d="M360.4 301.1 L357.1 305 L361.9 303.1Z" fill="#10e449" stroke="#10e449" stroke-width="0.6"/>
<path d="M431.3 302.9 L421.6 272.1" stroke="#04ee09" stroke-width="1" fill="none"/>
<path d="M429.2 290 L421.6 272.1 L425.6 291.2Z" fill="#04ee09" stroke="#04ee09" stroke-width="0.6"/>
<path d="M436.5 303.1 L426.2 270.5" stroke="#46e906" stroke-width="1" fill="none"/>
<path d="M434.2 289.5 L426.2 270.5 L430.5 290.7Z" fill="#46e906" stroke="#46e906" stroke-width="0.6"/>
<path d="M443 304.5 L432.1 269.9" stroke="#c1db0f" stroke-width="1" fill="none"/>
<path d="M440.5 290.1 L432.1 269.9 L436.9 291.2Z" fill="#c1db0f" stroke="#c1db0f" stroke-width="0.6"/>
<path d="M369 300.7 L362.6 305.4" stroke="#10acdb" stroke-width="1" fill="none"/>
<path d="M365.1 302 L362.6 305.4 L366.5 304Z" fill="#10acdb" stroke="#10acdb" stroke-width="0.6"/>
<path d="M423.4 304.4 L412.4 275.4" stroke="#0ae91a" stroke-width="1" fill="none"/>
<path d="M420.8 292.2 L412.4 275.4 L417.2 293.5Z" fill="#0ae91a" stroke="#0ae91a" stroke-width="0.6"/>
<path d="M356.4 302.6 L354 295.2" stroke="#10e628" stroke-width="1" fill="none"/>
<path d="M355.7 297.9 L354 295.2 L354.2 298.4Z" fill="#10e628" stroke="#10e628" stroke-width="0.6"/>
<path d="M351.3 302.8 L348.7 294.9" stroke="#06ec0e" stroke-width="1" fill="none"/>
<path d="M350.5 297.8 L348.7 294.9 L349 298.4Z" fill="#06ec0e" stroke="#06ec0e" stroke-width="0.6"/>
<path d="M419.2 305.1 L407.8 277" stroke="#0ee723" stroke-width="1" fill="none"/>
<path d="M416.4 293.1 L407.8 277 L412.9 294.6Z" fill="#0ee723" stroke="#0ee723" stroke-width="0.6"/>
<path d="M411.7 305.3 L399.2 278.4" stroke="#10e539" stroke-width="1" fill="none"/>
<path d="M408.4 293.7 L399.2 278.4 L405 295.3Z" fill="#10e539" stroke="#10e539" stroke-width="0.6"/>
<path d="M344.8 304.4 L342 296" stroke="#48e806" stroke-width="1" fill="none"/>
<path d="M343.9 299.1 L342 296 L342.4 299.6Z" fill="#48e806" stroke="#48e806" stroke-width="0.6"/>
<path d="M406.1 306.5 L393.5 281.9" stroke="#10df9f" stroke-width="1" fill="none"/>
<path d="M402.7 295.8 L393.5 281.9 L399.4 297.5Z" fill="#10df9f" stroke="#10df9f" stroke-width="0.6"/>
<path d="M389.2 304.3 L384.1 308.1" stroke="#105cf0" stroke-width="1" fill="none"/>
<path d="M386 305.2 L384.1 308.1 L387.4 307.2Z" fill="#105cf0" stroke="#105cf0" stroke-width="0.6"/>
<path d="M395.1 304.9 L389.8 308.8" stroke="#1064ef" stroke-width="1" fill="none"/>
<path d="M391.8 305.8 L389.8 308.8 L393.2 307.8Z" fill="#1064ef" stroke="#1064ef" stroke-width="0.6"/>
<path d="M459.3 309.6 L445.9 267.2" stroke="#efb70e" stroke-width="1" fill="none"/>
<path d="M455.8 292.1 L445.9 267.2 L452.1 293.2Z" fill="#efb70e" stroke="#efb70e" stroke-width="0.6"/>
<path d="M378.5 305.6 L374.2 308.7" stroke="#1042f0" stroke-width="1" fill="none"/>
<path d="M375.6 306.2 L374.2 308.7 L377 308.1Z" fill="#1042f0" stroke="#1042f0" stroke-width="0.6"/>
<path d="M443.3 309.4 L432.8 276.3" stroke="#66e509" stroke-width="1" fill="none"/>
<path d="M440.9 295.6 L432.8 276.3 L437.3 296.7Z" fill="#66e509" stroke="#66e509" stroke-width="0.6"/>
<path d="M452.7 310.1 L440.9 272.8" stroke="#efc800" stroke-width="1" fill="none"/>
<path d="M449.8 294.6 L440.9 272.8 L446.2 295.7Z" fill="#efc800" stroke="#efc800" stroke-width="0.6"/>
<path d="M439.4 310 L429.1 277.1" stroke="#5be608" stroke-width="1" fill="none"/>
<path d="M437.1 296.3 L429.1 277.1 L433.5 297.4Z" fill="#5be608" stroke="#5be608" stroke-width="0.6"/>
<path d="M368.6 307 L363.2 311" stroke="#106fec" stroke-width="1" fill="none"/>
<path d="M365.2 308.1 L363.2 311 L366.6 310Z" fill="#106fec" stroke="#106fec" stroke-width="0.6"/>
<path d="M432.8 310.8 L422.7 278.7" stroke="#25ec03" stroke-width="1" fill="none"/>
<path d="M430.6 297.4 L422.7 278.7 L427 298.5Z" fill="#25ec03" stroke="#25ec03" stroke-width="0.6"/>
<path d="M361.7 308.7 L359.6 302.3" stroke="#10cacf" stroke-width="1" fill="none"/>
<path d="M361.2 304.6 L359.6 302.3 L359.7 305.1Z" fill="#10cacf" stroke="#10cacf" stroke-width="0.6"/>
<path d="M422.6 311.7 L411.1 281.9" stroke="#06ec0f" stroke-width="1" fill="none"/>
<path d="M419.7 299.1 L411.1 281.9 L416.2 300.5Z" fill="#06ec0f" stroke="#06ec0f" stroke-width="0.6"/>
<path d="M345.3 309.7 L342.6 301.8" stroke="#06ec10" stroke-width="1" fill="none"/>
<path d="M344.4 304.7 L342.6 301.8 L342.9 305.2Z" fill="#06ec10" stroke="#06ec10" stroke-width="0.6"/>
<path d="M412.3 312.8 L399.9 286.2" stroke="#10e449" stroke-width="1" fill="none"/>
<path d="M409.1 301.4 L399.9 286.2 L405.6 303Z" fill="#10e449" stroke="#10e449" stroke-width="0.6"/>
<path d="M417.8 312.9 L406.4 286.1" stroke="#10e355" stroke-width="1" fill="none"/>
<path d="M415 301.4 L406.4 286.1 L411.5 302.9Z" fill="#10e355" stroke="#10e355" stroke-width="0.6"/>
<path d="M398.1 310 L391.6 314.7" stroke="#10aedb" stroke-width="1" fill="none"/>
<path d="M394.2 311.4 L391.6 314.7 L395.6 313.3Z" fill="#10aedb" stroke="#10aedb" stroke-width="0.6"/>
<path d="M403.5 311 L396.4 316.3" stroke="#10d8ca" stroke-width="1" fill="none"/>
<path d="M399.2 312.7 L396.4 316.3 L400.7 314.6Z" fill="#10d8ca" stroke="#10d8ca" stroke-width="0.6"/>
<path d="M392.2 311.7 L386.4 315.9" stroke="#1084e7" stroke-width="1" fill="none"/>
<path d="M388.6 312.9 L386.4 315.9 L390 314.8Z" fill="#1084e7" stroke="#1084e7" stroke-width="0.6"/>
<path d="M370 313.8 L363.5 318.5" stroke="#10afda" stroke-width="1" fill="none"/>
<path d="M366 315.2 L363.5 318.5 L367.5 317.1Z" fill="#10afda" stroke="#10afda" stroke-width="0.6"/>
<path d="M431.2 318.1 L421.2 287.8" stroke="#06ec0e" stroke-width="1" fill="none"/>
<path d="M429 305.4 L421.2 287.8 L425.4 306.6Z" fill="#06ec0e" stroke="#06ec0e" stroke-width="0.6"/>
<path d="M418.3 318.9 L407.2 292.7" stroke="#10e173" stroke-width="1" fill="none"/>
<path d="M415.6 307.7 L407.2 292.7 L412.1 309.2Z" fill="#10e173" stroke="#10e173" stroke-width="0.6"/>
<path d="M357 317.3 L354.6 310.2" stroke="#10e260" stroke-width="1" fill="none"/>
<path d="M356.3 312.8 L354.6 310.2 L354.8 313.3Z" fill="#10e260" stroke="#10e260" stroke-width="0.6"/>
<path d="M414 319.3 L402.3 293.7" stroke="#10e086" stroke-width="1" fill="none"/>
<path d="M411 308.3 L402.3 293.7 L407.6 309.9Z" fill="#10e086" stroke="#10e086" stroke-width="0.6"/>
<path d="M352.7 317.8 L350.2 310.3" stroke="#0ee822" stroke-width="1" fill="none"/>
<path d="M351.9 313 L350.2 310.3 L350.4 313.5Z" fill="#0ee822" stroke="#0ee822" stroke-width="0.6"/>
<path d="M403.7 316.8 L395.3 323" stroke="#0de820" stroke-width="1" fill="none"/>
<path d="M398.8 318.9 L395.3 323 L400.2 320.9Z" fill="#0de820" stroke="#0de820" stroke-width="0.6"/>
<path d="M423.9 320.4 L413.2 292.6" stroke="#10e62e" stroke-width="1" fill="none"/>
<path d="M421.4 308.6 L413.2 292.6 L417.9 310Z" fill="#10e62e" stroke="#10e62e" stroke-width="0.6"/>
<path d="M400.3 319.2 L391.7 325.4" stroke="#0be91c" stroke-width="1" fill="none"/>
<path d="M395.3 321.3 L391.7 325.4 L396.7 323.2Z" fill="#0be91c" stroke="#0be91c" stroke-width="0.6"/>
<path d="M386.2 319.2 L378.5 324.9" stroke="#10e17c" stroke-width="1" fill="none"/>
<path d="M381.6 321.1 L378.5 324.9 L383 323Z" fill="#10e17c" stroke="#10e17c" stroke-width="0.6"/>
<path d="M378.7 321.6 L370 328" stroke="#08eb15" stroke-width="1" fill="none"/>
<path d="M373.6 323.9 L370 328 L375 325.8Z" fill="#08eb15" stroke="#08eb15" stroke-width="0.6"/>
<path d="M503.8 382.5 L502.7 394.8 L497.7 406.8 L489 417.9 L477.1 427.5 L462.6 435 L446.3 440.3 L428.8 442.9 L411.2 442.7 L394.3 439.8 L378.9 434.3 L365.8 426.5 L355.7 416.8 L349 405.6 L346.2 393.5 L347.3 381.2 L352.3 369.2 L361 358.1 L372.9 348.5 L387.4 341 L403.7 335.7 L421.2 333.1 L438.8 333.3 L455.7 336.2 L471.1 341.7 L484.2 349.5 L494.3 359.2 L501 370.4 L503.8 382.5" stroke="#ff8000" stroke-width="1" fill="none"/>
<path d="M475.9 367.7 L487.3 373.5 L497.4 380.8 L505.8 389.4 L512.4 398.9 L517 409.2 L519.5 420 L519.8 431 L517.9 441.9 L513.9 452.5 L507.8 462.4 L499.8 471.4 L490.2 479.3 L479.1 485.8 L466.9 490.9 L453.9 494.2 L440.5 495.9 L426.9 495.7 L413.5 493.8 L400.8 490.2 L388.9 484.9 L378.3 478.1 L369.2 470.1 L361.9 460.9 L356.5 450.8 L353.2 440.2 L352 429.2 L353.1 418.2 L356.3 407.5" stroke="#ff6000" stroke-width="1" fill="none"/>
<path d="M521.9 429.3 L525.9 443.4 L527 457.9 L525.1 472.3 L520.4 486.1 L513 498.9 L503.1 510.3 L491 519.7 L477.3 527 L462.4 531.7 L446.7 533.9 L430.9 533.3 L415.5 530.1 L401 524.3 L387.9 516.1 L376.7 505.9 L367.7 493.9 L361.3 480.6 L357.8 466.5 L357.1 452 L359.4 437.6 L364.5 423.9 L372.4 411.3" stroke="#ff0000" stroke-width="1" fill="none"/>
<path d="M508.4 416 L515.3 430.3 L518.7 445.7 L518.3 461.4 L514.2 476.6 L506.6 490.7 L495.9 502.9 L482.4 512.7 L467 519.7 L450.3 523.4 L433.1 523.7 L416.2 520.7 L400.5 514.4 L386.6 505.1 L375.3 493.3 L367 479.6 L362.2 464.5 L361.1 448.9 L363.7 433.4 L369.9 418.8 L379.5 405.7" stroke="#ff8000" stroke-width="1" fill="none"/>
<path d="M471.9 383.6 L483.9 388.5 L494.5 395.2 L503.5 403.5 L510.6 413.1 L515.3 423.6 L517.7 434.8 L517.6 446.1 L515.1 457.2 L510.1 467.7 L502.9 477.2 L493.8 485.4 L483 492" stroke="#ff0000" stroke-width="1" fill="none"/>
<path d="M467.2 397.1 L478.5 401.7 L488.5 408.2 L496.8 416.2 L502.9 425.4 L506.7 435.5 L508 446 L506.7 456.5 L502.9 466.6 L496.8 475.8 L488.5 483.8 L478.5 490.3 L467.2 494.9" stroke="#ff6000" stroke-width="1" fill="none"/>
<path d="M371 357 L402.4 384.7" stroke="#ff8000" stroke-width="1" fill="none"/>
<path d="M365 428 L402.4 415.8" stroke="#ff8000" stroke-width="1" fill="none"/>
<path d="M488 420 L442 416" stroke="#ff8000" stroke-width="1" fill="none"/>
<path d="M474.7 352 L442 384.7" stroke="#ff8000" stroke-width="1" fill="none"/>
<path d="M402.4 384.7 L402.4 415.8 L442 416 L442 384.7 L402.4 384.7" stroke="#ff8000" stroke-width="1" fill="none"/>
<path d="M383 405 L420 451.5" stroke="#ff6000" stroke-width="1" fill="none"/>
<path d="M383.7 514.6 L421.8 480.4" stroke="#ff6000" stroke-width="1" fill="none"/>
<path d="M498.5 504.5 L463.5 478.8" stroke="#ff6000" stroke-width="1" fill="none"/>
<path d="M503 402 L462 448" stroke="#ff6000" stroke-width="1" fill="none"/>
<path d="M420 451.5 L421.8 480.4 L463.5 478.8 L462 448 L420 451.5" stroke="#ff6000" stroke-width="1" fill="none"/>
<path d="M386 408 L423 449" stroke="#ff0000" stroke-width="1" fill="none"/>
<path d="M386 512 L424 478" stroke="#ff0000" stroke-width="1" fill="none"/>
<path d="M496 502 L461 476" stroke="#ff0000" stroke-width="1" fill="none"/>
<path d="M500 405 L460 446" stroke="#ff0000" stroke-width="1" fill="none"/>
<path d="M423 449 L424 478 L461 476 L460 446 L423 449" stroke="#ff0000" stroke-width="1" fill="none"/>
<path d="M351 330 L346 396 L349 419 L358 456 L358.8 473 L363.5 492 L368 503 L383.7 517 L404.7 526 L423.4 531 L450 534" stroke="#ff0000" stroke-width="1" fill="none"/>
<path d="M365 430 L372 470 L384 500 L400 516" stroke="#ff0000" stroke-width="1" fill="none"/>
<path d="M392 450 L400 480 L421.8 480.4" stroke="#ff0000" stroke-width="1" fill="none"/>
<path d="M430 400 L421 452" stroke="#ff0000" stroke-width="1" fill="none"/>
<path d="M463 478 L498 505" stroke="#ff0000" stroke-width="1" fill="none"/>
<path d="M478 430 L506 470 L498.5 506.8" stroke="#ff0000" stroke-width="1" fill="none"/>
<path d="M421.3 400.9 L394 407.4" stroke="#ff4f0b" stroke-width="1" fill="none"/>
<path d="M404.6 403.3 L394 407.4 L405.3 406.2Z" fill="#ff4f0b" stroke="#ff4f0b" stroke-width="0.6"/>
<path d="M432.1 418.7 L395 421.9" stroke="#ff3603" stroke-width="1" fill="none"/>
<path d="M409.7 419.2 L395 421.9 L410 422.1Z" fill="#ff3603" stroke="#ff3603" stroke-width="0.6"/>
<path d="M388 410.1 L358.9 416.6" stroke="#ff0900" stroke-width="1" fill="none"/>
<path d="M370.2 412.5 L358.9 416.6 L370.9 415.5Z" fill="#ff0900" stroke="#ff0900" stroke-width="0.6"/>
<path d="M427 407.6 L389.7 416.6" stroke="#ff3a04" stroke-width="1" fill="none"/>
<path d="M404.3 411.6 L389.7 416.6 L405 414.5Z" fill="#ff3a04" stroke="#ff3a04" stroke-width="0.6"/>
<path d="M398.6 410.6 L366.7 412.9" stroke="#ff1800" stroke-width="1" fill="none"/>
<path d="M379.4 410.5 L366.7 412.9 L379.6 413.5Z" fill="#ff1800" stroke="#ff1800" stroke-width="0.6"/>
<path d="M487.6 422 L441.3 426.7" stroke="#f59510" stroke-width="1" fill="none"/>
<path d="M459.6 423.3 L441.3 426.7 L459.9 426.3Z" fill="#f59510" stroke="#f59510" stroke-width="0.6"/>
<path d="M482.4 413 L438.9 417.3" stroke="#f0a810" stroke-width="1" fill="none"/>
<path d="M456.1 414.1 L438.9 417.3 L456.4 417.1Z" fill="#f0a810" stroke="#f0a810" stroke-width="0.6"/>
<path d="M427.7 418.9 L395.6 423.1" stroke="#ff600d" stroke-width="1" fill="none"/>
<path d="M408.2 419.9 L395.6 423.1 L408.6 422.9Z" fill="#ff600d" stroke="#ff600d" stroke-width="0.6"/>
<path d="M443.6 404.7 L401.9 413.2" stroke="#ff3f07" stroke-width="1" fill="none"/>
<path d="M418.3 408.4 L401.9 413.2 L418.9 411.3Z" fill="#ff3f07" stroke="#ff3f07" stroke-width="0.6"/>
<path d="M398.4 412.2 L353.7 415.1" stroke="#ff3402" stroke-width="1" fill="none"/>
<path d="M371.5 412.4 L353.7 415.1 L371.7 415.4Z" fill="#ff3402" stroke="#ff3402" stroke-width="0.6"/>
<path d="M448.8 410.7 L412.7 415.9" stroke="#ff6e0e" stroke-width="1" fill="none"/>
<path d="M426.9 412.3 L412.7 415.9 L427.4 415.3Z" fill="#ff6e0e" stroke="#ff6e0e" stroke-width="0.6"/>
<path d="M427.7 413.7 L399.7 418.5" stroke="#ff4108" stroke-width="1" fill="none"/>
<path d="M410.7 415.1 L399.7 418.5 L411.2 418.1Z" fill="#ff4108" stroke="#ff4108" stroke-width="0.6"/>
<path d="M438.5 403.4 L401.5 406.8" stroke="#ff490a" stroke-width="1" fill="none"/>
<path d="M416.1 404 L401.5 406.8 L416.4 406.9Z" fill="#ff490a" stroke="#ff490a" stroke-width="0.6"/>
<path d="M433.2 399.8 L403.6 403.8" stroke="#ff3a04" stroke-width="1" fill="none"/>
<path d="M415.2 400.7 L403.6 403.8 L415.6 403.7Z" fill="#ff3a04" stroke="#ff3a04" stroke-width="0.6"/>
<path d="M443 396.1 L401 404" stroke="#ff6c0e" stroke-width="1" fill="none"/>
<path d="M417.5 399.4 L401 404 L418.1 402.3Z" fill="#ff6c0e" stroke="#ff6c0e" stroke-width="0.6"/>
<path d="M445.5 398.4 L398.7 402.4" stroke="#ff4e0b" stroke-width="1" fill="none"/>
<path d="M417.3 399.3 L398.7 402.4 L417.6 402.3Z" fill="#ff4e0b" stroke="#ff4e0b" stroke-width="0.6"/>
<path d="M471.8 422.8 L440.2 427" stroke="#fb8910" stroke-width="1" fill="none"/>
<path d="M452.6 423.8 L440.2 427 L453 426.8Z" fill="#fb8910" stroke="#fb8910" stroke-width="0.6"/>
<path d="M441.6 419.3 L398.8 428.5" stroke="#ff7c10" stroke-width="1" fill="none"/>
<path d="M415.6 423.3 L398.8 428.5 L416.2 426.3Z" fill="#ff7c10" stroke="#ff7c10" stroke-width="0.6"/>
<path d="M401.2 405.5 L355.6 410.7" stroke="#ff3301" stroke-width="1" fill="none"/>
<path d="M373.7 407.2 L355.6 410.7 L374 410.1Z" fill="#ff3301" stroke="#ff3301" stroke-width="0.6"/>
<path d="M467.9 401.1 L435.9 404.4" stroke="#ff600d" stroke-width="1" fill="none"/>
<path d="M448.6 401.6 L435.9 404.4 L448.9 404.6Z" fill="#ff600d" stroke="#ff600d" stroke-width="0.6"/>
<path d="M436.9 404 L406.3 410.6" stroke="#ff3d06" stroke-width="1" fill="none"/>
<path d="M418.2 406.5 L406.3 410.6 L418.8 409.4Z" fill="#ff3d06" stroke="#ff3d06" stroke-width="0.6"/>
<path d="M453.6 420.3 L423.6 424.3" stroke="#ff3b05" stroke-width="1" fill="none"/>
<path d="M435.4 421.2 L423.6 424.3 L435.8 424.2Z" fill="#ff3b05" stroke="#ff3b05" stroke-width="0.6"/>
<path d="M453.9 404.9 L414.9 411.8" stroke="#fe8110" stroke-width="1" fill="none"/>
<path d="M430.2 407.6 L414.9 411.8 L430.7 410.5Z" fill="#fe8110" stroke="#fe8110" stroke-width="0.6"/>
<path d="M404.1 422.4 L360.4 427.2" stroke="#ff3000" stroke-width="1" fill="none"/>
<path d="M377.7 423.8 L360.4 427.2 L378 426.8Z" fill="#ff3000" stroke="#ff3000" stroke-width="0.6"/>
<path d="M433 339.2 L410.5 336.3" stroke="#ff0a00" stroke-width="1" fill="none"/>
<path d="M419.7 336.1 L410.5 336.3 L419.3 338.8Z" fill="#ff0a00" stroke="#ff0a00" stroke-width="0.6"/>
<path d="M408.8 342.5 L386.4 341.8" stroke="#ff1500" stroke-width="1" fill="none"/>
<path d="M395.4 340.7 L386.4 341.8 L395.3 343.5Z" fill="#ff1500" stroke="#ff1500" stroke-width="0.6"/>
<path d="M480.7 351.5 L462.7 338.2" stroke="#ff1600" stroke-width="1" fill="none"/>
<path d="M470.8 342.4 L462.7 338.2 L469.1 344.6Z" fill="#ff1600" stroke="#ff1600" stroke-width="0.6"/>
<path d="M423.4 338.9 L401.2 336.9" stroke="#ff1c00" stroke-width="1" fill="none"/>
<path d="M410.2 336.3 L401.2 336.9 L410 339.1Z" fill="#ff1c00" stroke="#ff1c00" stroke-width="0.6"/>
<path d="M364.1 368.6 L342.6 374" stroke="#ff2100" stroke-width="1" fill="none"/>
<path d="M350.9 370.5 L342.6 374 L351.6 373.2Z" fill="#ff2100" stroke="#ff2100" stroke-width="0.6"/>
<path d="M384.8 350.2 L362.9 351.9" stroke="#ff2700" stroke-width="1" fill="none"/>
<path d="M371.5 349.8 L362.9 351.9 L371.7 352.6Z" fill="#ff2700" stroke="#ff2700" stroke-width="0.6"/>
<path d="M457 342.9 L436.7 334.7" stroke="#ff2900" stroke-width="1" fill="none"/>
<path d="M445.3 336.6 L436.7 334.7 L444.3 339.2Z" fill="#ff2900" stroke="#ff2900" stroke-width="0.6"/>
<path d="M500.7 371.2 L488.1 353.5" stroke="#ff3100" stroke-width="1" fill="none"/>
<path d="M494.3 359.8 L488.1 353.5 L492 361.4Z" fill="#ff3100" stroke="#ff3100" stroke-width="0.6"/>
<path d="M491.4 361.4 L476.3 345.9" stroke="#ff3301" stroke-width="1" fill="none"/>
<path d="M483.4 351.2 L476.3 345.9 L481.3 353.1Z" fill="#ff3301" stroke="#ff3301" stroke-width="0.6"/>
<path d="M361.2 380.3 L341.1 387.6" stroke="#ff3804" stroke-width="1" fill="none"/>
<path d="M348.7 383.3 L341.1 387.6 L349.6 386Z" fill="#ff3804" stroke="#ff3804" stroke-width="0.6"/>
<path d="M443.2 342.6 L422.7 337.3" stroke="#ff3a05" stroke-width="1" fill="none"/>
<path d="M431.3 338.1 L422.7 337.3 L430.6 340.8Z" fill="#ff3a05" stroke="#ff3a05" stroke-width="0.6"/>
<path d="M374.2 361.5 L353.4 364.8" stroke="#ff3d06" stroke-width="1" fill="none"/>
<path d="M361.5 362.1 L353.4 364.8 L361.9 364.8Z" fill="#ff3d06" stroke="#ff3d06" stroke-width="0.6"/>
<path d="M398.5 351.9 L377.6 352.2" stroke="#ff4007" stroke-width="1" fill="none"/>
<path d="M386 350.7 L377.6 352.2 L386 353.5Z" fill="#ff4007" stroke="#ff4007" stroke-width="0.6"/>
<path d="M481.4 359.8 L465.7 346.2" stroke="#ff4208" stroke-width="1" fill="none"/>
<path d="M472.9 350.6 L465.7 346.2 L471.1 352.7Z" fill="#ff4208" stroke="#ff4208" stroke-width="0.6"/>
<path d="M499.1 380 L488.6 362.3" stroke="#ff4409" stroke-width="1" fill="none"/>
<path d="M494 368.7 L488.6 362.3 L491.6 370.1Z" fill="#ff4409" stroke="#ff4409" stroke-width="0.6"/>
<path d="M468.4 353.4 L451 342.6" stroke="#ff490a" stroke-width="1" fill="none"/>
<path d="M458.7 345.7 L451 342.6 L457.2 348.1Z" fill="#ff490a" stroke="#ff490a" stroke-width="0.6"/>
<path d="M500.2 412.1 L497.8 391.8" stroke="#ff4b0a" stroke-width="1" fill="none"/>
<path d="M500.1 399.7 L497.8 391.8 L497.3 400Z" fill="#ff4b0a" stroke="#ff4b0a" stroke-width="0.6"/>
<path d="M417.9 348.6 L397.6 347" stroke="#ff4e0b" stroke-width="1" fill="none"/>
<path d="M405.8 346.2 L397.6 347 L405.6 349Z" fill="#ff4e0b" stroke="#ff4e0b" stroke-width="0.6"/>
<path d="M386.9 358.9 L366.7 360.5" stroke="#ff580c" stroke-width="1" fill="none"/>
<path d="M374.7 358.4 L366.7 360.5 L374.9 361.2Z" fill="#ff580c" stroke="#ff580c" stroke-width="0.6"/>
<path d="M410.7 350.5 L390.6 349.6" stroke="#ff5b0c" stroke-width="1" fill="none"/>
<path d="M398.7 348.6 L390.6 349.6 L398.5 351.4Z" fill="#ff5b0c" stroke="#ff5b0c" stroke-width="0.6"/>
<path d="M453.1 349.9 L434.7 342.4" stroke="#ff640d" stroke-width="1" fill="none"/>
<path d="M442.6 344.1 L434.7 342.4 L441.5 346.7Z" fill="#ff640d" stroke="#ff640d" stroke-width="0.6"/>
<path d="M358.5 395.5 L343 406.5" stroke="#ff6a0e" stroke-width="1" fill="none"/>
<path d="M348.4 400.9 L343 406.5 L350 403.2Z" fill="#ff6a0e" stroke="#ff6a0e" stroke-width="0.6"/>
<path d="M487.9 373.1 L475.5 357.7" stroke="#ff6d0e" stroke-width="1" fill="none"/>
<path d="M481.5 363 L475.5 357.7 L479.3 364.8Z" fill="#ff6d0e" stroke="#ff6d0e" stroke-width="0.6"/>
<path d="M445.9 348.7 L427.1 342.8" stroke="#ff6e0e" stroke-width="1" fill="none"/>
<path d="M435 343.8 L427.1 342.8 L434.2 346.5Z" fill="#ff6e0e" stroke="#ff6e0e" stroke-width="0.6"/>
<path d="M359.2 406.2 L351.7 418.4" stroke="#ff700e" stroke-width="1" fill="none"/>
<path d="M353.5 412.7 L351.7 418.4 L355.9 414.2Z" fill="#ff700e" stroke="#ff700e" stroke-width="0.6"/>
<path d="M499.6 402 L494.7 383" stroke="#ff720f" stroke-width="1" fill="none"/>
<path d="M498 390.2 L494.7 383 L495.3 390.9Z" fill="#ff720f" stroke="#ff720f" stroke-width="0.6"/>
<path d="M362.7 389.5 L345.2 397.9" stroke="#ff7c10" stroke-width="1" fill="none"/>
<path d="M351.6 393.3 L345.2 397.9 L352.8 395.8Z" fill="#ff7c10" stroke="#ff7c10" stroke-width="0.6"/>
<path d="M499 390.9 L491.4 373" stroke="#ff7f10" stroke-width="1" fill="none"/>
<path d="M495.7 379.6 L491.4 373 L493.1 380.7Z" fill="#ff7f10" stroke="#ff7f10" stroke-width="0.6"/>
<path d="M374.2 370.7 L355.2 374.2" stroke="#fe8310" stroke-width="1" fill="none"/>
<path d="M362.6 371.4 L355.2 374.2 L363.1 374.1Z" fill="#fe8310" stroke="#fe8310" stroke-width="0.6"/>
<path d="M489.3 421.9 L489.9 402.8" stroke="#fb8810" stroke-width="1" fill="none"/>
<path d="M491.1 410.5 L489.9 402.8 L488.3 410.4Z" fill="#fb8810" stroke="#fb8810" stroke-width="0.6"/>
<path d="M489.3 380.7 L478.9 364.9" stroke="#f98d10" stroke-width="1" fill="none"/>
<path d="M484.2 370.4 L478.9 364.9 L481.9 372Z" fill="#f98d10" stroke="#f98d10" stroke-width="0.6"/>
<path d="M364.6 417 L368.3 427.6" stroke="#f69310" stroke-width="1" fill="none"/>
<path d="M365.5 423.8 L368.3 427.6 L368.1 422.9Z" fill="#f69310" stroke="#f69310" stroke-width="0.6"/>
<path d="M392.9 441 L410.9 439.9" stroke="#f69310" stroke-width="1" fill="none"/>
<path d="M403.8 441.7 L410.9 439.9 L403.6 438.9Z" fill="#f69310" stroke="#f69310" stroke-width="0.6"/>
<path d="M397.7 359.8 L379.1 360.1" stroke="#f69410" stroke-width="1" fill="none"/>
<path d="M386.5 358.6 L379.1 360.1 L386.5 361.4Z" fill="#f69410" stroke="#f69410" stroke-width="0.6"/>
<path d="M428.9 351.7 L410.7 349.1" stroke="#f39910" stroke-width="1" fill="none"/>
<path d="M418.1 348.8 L410.7 349.1 L417.8 351.5Z" fill="#f39910" stroke="#f39910" stroke-width="0.6"/>
<path d="M371.4 389.8 L354.2 396.1" stroke="#f29c10" stroke-width="1" fill="none"/>
<path d="M360.6 392.3 L354.2 396.1 L361.6 394.9Z" fill="#f29c10" stroke="#f29c10" stroke-width="0.6"/>
<path d="M367 407.7 L360.3 417.6" stroke="#f19e10" stroke-width="1" fill="none"/>
<path d="M361.8 412.8 L360.3 417.6 L364.1 414.4Z" fill="#f19e10" stroke="#f19e10" stroke-width="0.6"/>
<path d="M466.7 362.4 L451.9 351.9" stroke="#f0a010" stroke-width="1" fill="none"/>
<path d="M458.6 355 L451.9 351.9 L457 357.3Z" fill="#f0a010" stroke="#f0a010" stroke-width="0.6"/>
<path d="M470.6 434.7 L476 417.6" stroke="#f0a310" stroke-width="1" fill="none"/>
<path d="M475.1 424.8 L476 417.6 L472.5 424Z" fill="#f0a310" stroke="#f0a310" stroke-width="0.6"/>
<path d="M475.5 372.8 L463.1 360.1" stroke="#f0a610" stroke-width="1" fill="none"/>
<path d="M469.1 364.2 L463.1 360.1 L467.1 366.2Z" fill="#f0a610" stroke="#f0a610" stroke-width="0.6"/>
<path d="M489.5 403.4 L485 386.3" stroke="#f0a810" stroke-width="1" fill="none"/>
<path d="M488.1 392.8 L485 386.3 L485.4 393.5Z" fill="#f0a810" stroke="#f0a810" stroke-width="0.6"/>
<path d="M375.9 379.2 L358.7 382.9" stroke="#f0a910" stroke-width="1" fill="none"/>
<path d="M365.3 380.1 L358.7 382.9 L365.8 382.8Z" fill="#f0a910" stroke="#f0a910" stroke-width="0.6"/>
<path d="M454.7 359.4 L439 351.5" stroke="#f0aa10" stroke-width="1" fill="none"/>
<path d="M445.9 353.4 L439 351.5 L444.7 355.9Z" fill="#f0aa10" stroke="#f0aa10" stroke-width="0.6"/>
<path d="M375.9 428.1 L387.1 432.4" stroke="#f0ab10" stroke-width="1" fill="none"/>
<path d="M382.1 432 L387.1 432.4 L383.1 429.3Z" fill="#f0ab10" stroke="#f0ab10" stroke-width="0.6"/>
<path d="M387.2 369.2 L369.8 370.7" stroke="#f0ac10" stroke-width="1" fill="none"/>
<path d="M376.7 368.7 L369.8 370.7 L376.9 371.5Z" fill="#f0ac10" stroke="#f0ac10" stroke-width="0.6"/>
<path d="M448 442 L458.2 428.2" stroke="#f0b010" stroke-width="1" fill="none"/>
<path d="M455.3 434.5 L458.2 428.2 L453 432.9Z" fill="#f0b010" stroke="#f0b010" stroke-width="0.6"/>
<path d="M486.9 412.2 L484.9 395.2" stroke="#f0b010" stroke-width="1" fill="none"/>
<path d="M487.1 401.8 L484.9 395.2 L484.3 402.2Z" fill="#f0b010" stroke="#f0b010" stroke-width="0.6"/>
<path d="M408 359.8 L390.9 359" stroke="#f0b010" stroke-width="1" fill="none"/>
<path d="M397.8 357.9 L390.9 359 L397.7 360.7Z" fill="#f0b010" stroke="#f0b010" stroke-width="0.6"/>
<path d="M487.7 390.2 L480.2 375" stroke="#f0b310" stroke-width="1" fill="none"/>
<path d="M484.4 380.5 L480.2 375 L481.9 381.7Z" fill="#f0b310" stroke="#f0b310" stroke-width="0.6"/>
<path d="M428.1 358.8 L411.3 356.2" stroke="#f0b310" stroke-width="1" fill="none"/>
<path d="M418.2 355.9 L411.3 356.2 L417.8 358.6Z" fill="#f0b310" stroke="#f0b310" stroke-width="0.6"/>
<path d="M410.7 439.4 L425.7 434.7" stroke="#efb50f" stroke-width="1" fill="none"/>
<path d="M420.1 437.9 L425.7 434.7 L419.2 435.2Z" fill="#efb50f" stroke="#efb50f" stroke-width="0.6"/>
<path d="M475.6 421.9 L476.3 405.1" stroke="#efb60f" stroke-width="1" fill="none"/>
<path d="M477.4 411.9 L476.3 405.1 L474.6 411.8Z" fill="#efb60f" stroke="#efb60f" stroke-width="0.6"/>
<path d="M421.3 360.9 L404.7 358.9" stroke="#efb60f" stroke-width="1" fill="none"/>
<path d="M411.5 358.3 L404.7 358.9 L411.2 361.1Z" fill="#efb60f" stroke="#efb60f" stroke-width="0.6"/>
<path d="M477.2 379.6 L466.9 366.6" stroke="#eeb70e" stroke-width="1" fill="none"/>
<path d="M472.1 370.9 L466.9 366.6 L469.9 372.7Z" fill="#eeb70e" stroke="#eeb70e" stroke-width="0.6"/>
<path d="M374.1 398.4 L361.3 404.4" stroke="#eeb70e" stroke-width="1" fill="none"/>
<path d="M365.9 400.8 L361.3 404.4 L367.1 403.3Z" fill="#eeb70e" stroke="#eeb70e" stroke-width="0.6"/>
<path d="M388.9 429.9 L400.1 430.3" stroke="#eeb90d" stroke-width="1" fill="none"/>
<path d="M395.6 431.5 L400.1 430.3 L395.7 428.7Z" fill="#eeb90d" stroke="#eeb90d" stroke-width="0.6"/>
<path d="M460.7 433 L465.9 417.5" stroke="#eeb90d" stroke-width="1" fill="none"/>
<path d="M465.2 424.1 L465.9 417.5 L462.5 423.2Z" fill="#eeb90d" stroke="#eeb90d" stroke-width="0.6"/>
<path d="M422.1 439.8 L436.3 432.8" stroke="#edb90d" stroke-width="1" fill="none"/>
<path d="M431.2 436.9 L436.3 432.8 L430 434.3Z" fill="#edb90d" stroke="#edb90d" stroke-width="0.6"/>
<path d="M385.3 380.5 L369.2 382.6" stroke="#edba0c" stroke-width="1" fill="none"/>
<path d="M375.4 380.4 L369.2 382.6 L375.8 383.1Z" fill="#edba0c" stroke="#edba0c" stroke-width="0.6"/>
<path d="M432.5 440.2 L444.7 429.6" stroke="#edba0c" stroke-width="1" fill="none"/>
<path d="M440.8 434.9 L444.7 429.6 L438.9 432.8Z" fill="#edba0c" stroke="#edba0c" stroke-width="0.6"/>
<path d="M464.1 372.1 L451.6 361.9" stroke="#edbb0c" stroke-width="1" fill="none"/>
<path d="M457.4 364.9 L451.6 361.9 L455.7 367.1Z" fill="#edbb0c" stroke="#edbb0c" stroke-width="0.6"/>
<path d="M379 418.5 L384.1 424.8" stroke="#edbb0c" stroke-width="1" fill="none"/>
<path d="M381 423.2 L384.1 424.8 L383.1 421.4Z" fill="#edbb0c" stroke="#edbb0c" stroke-width="0.6"/>
<path d="M441.1 362.2 L425.9 357.1" stroke="#ecbc0b" stroke-width="1" fill="none"/>
<path d="M432.4 357.8 L425.9 357.1 L431.6 360.5Z" fill="#ecbc0b" stroke="#ecbc0b" stroke-width="0.6"/>
<path d="M395.5 371.9 L379.5 372.5" stroke="#ecbc0b" stroke-width="1" fill="none"/>
<path d="M385.8 370.9 L379.5 372.5 L385.9 373.7Z" fill="#ecbc0b" stroke="#ecbc0b" stroke-width="0.6"/>
<path d="M408.2 368.6 L392.6 367.7" stroke="#ecbf09" stroke-width="1" fill="none"/>
<path d="M398.9 366.7 L392.6 367.7 L398.8 369.5Z" fill="#ecbf09" stroke="#ecbf09" stroke-width="0.6"/>
<path d="M400.5 431.3 L411.4 428.9" stroke="#ecbf09" stroke-width="1" fill="none"/>
<path d="M407.4 431.2 L411.4 428.9 L406.7 428.5Z" fill="#ecbf09" stroke="#ecbf09" stroke-width="0.6"/>
<path d="M383 397.4 L370.1 401.1" stroke="#ecc107" stroke-width="1" fill="none"/>
<path d="M374.9 398.3 L370.1 401.1 L375.6 401Z" fill="#ecc107" stroke="#ecc107" stroke-width="0.6"/>
<path d="M450.5 433.3 L456.6 419.2" stroke="#ecc107" stroke-width="1" fill="none"/>
<path d="M455.4 425.4 L456.6 419.2 L452.8 424.3Z" fill="#ecc107" stroke="#ecc107" stroke-width="0.6"/>
<path d="M476.7 392.3 L469.5 378.9" stroke="#eec305" stroke-width="1" fill="none"/>
<path d="M473.6 383.6 L469.5 378.9 L471.1 384.9Z" fill="#eec305" stroke="#eec305" stroke-width="0.6"/>
<path d="M474.5 413.7 L472.9 398.8" stroke="#eec503" stroke-width="1" fill="none"/>
<path d="M474.9 404.6 L472.9 398.8 L472.1 404.9Z" fill="#eec503" stroke="#eec503" stroke-width="0.6"/>
<path d="M476.7 403 L472.1 388.7" stroke="#eec503" stroke-width="1" fill="none"/>
<path d="M475.3 394 L472.1 388.7 L472.6 394.8Z" fill="#eec503" stroke="#eec503" stroke-width="0.6"/>
<path d="M394.5 381.1 L379.6 381.8" stroke="#efc602" stroke-width="1" fill="none"/>
<path d="M385.5 380.1 L379.6 381.8 L385.6 382.9Z" fill="#efc602" stroke="#efc602" stroke-width="0.6"/>
<path d="M466.8 381.9 L457 371" stroke="#efc701" stroke-width="1" fill="none"/>
<path d="M462 374.4 L457 371 L459.9 376.3Z" fill="#efc701" stroke="#efc701" stroke-width="0.6"/>
<path d="M386.4 388.6 L371.9 390.9" stroke="#f0c701" stroke-width="1" fill="none"/>
<path d="M377.4 388.6 L371.9 390.9 L377.9 391.4Z" fill="#f0c701" stroke="#f0c701" stroke-width="0.6"/>
<path d="M383.7 409.4 L377.2 414.1" stroke="#ebca02" stroke-width="1" fill="none"/>
<path d="M379 411.1 L377.2 414.1 L380.6 413.4Z" fill="#ebca02" stroke="#ebca02" stroke-width="0.6"/>
<path d="M433.6 431.7 L441 421" stroke="#e7cb03" stroke-width="1" fill="none"/>
<path d="M439.2 426.1 L441 421 L436.9 424.5Z" fill="#e7cb03" stroke="#e7cb03" stroke-width="0.6"/>
<path d="M425.3 431.7 L434 424.2" stroke="#e7cc03" stroke-width="1" fill="none"/>
<path d="M431.4 428.2 L434 424.2 L429.6 426.1Z" fill="#e7cc03" stroke="#e7cc03" stroke-width="0.6"/>
<path d="M451.8 372.7 L439.6 365.2" stroke="#e6cc03" stroke-width="1" fill="none"/>
<path d="M445.2 367 L439.6 365.2 L443.7 369.4Z" fill="#e6cc03" stroke="#e6cc03" stroke-width="0.6"/>
<path d="M463.4 420.9 L463.9 406.6" stroke="#e3cd04" stroke-width="1" fill="none"/>
<path d="M465.1 412.4 L463.9 406.6 L462.3 412.3Z" fill="#e3cd04" stroke="#e3cd04" stroke-width="0.6"/>
<path d="M433.4 367.8 L419.6 364.3" stroke="#dfcf05" stroke-width="1" fill="none"/>
<path d="M425.5 364.3 L419.6 364.3 L424.8 367Z" fill="#dfcf05" stroke="#dfcf05" stroke-width="0.6"/>
<path d="M408.4 429.8 L417.3 425.9" stroke="#ddcf06" stroke-width="1" fill="none"/>
<path d="M414.3 428.7 L417.3 425.9 L413.1 426.2Z" fill="#ddcf06" stroke="#ddcf06" stroke-width="0.6"/>
<path d="M419.2 369.2 L405.7 367.3" stroke="#cad70c" stroke-width="1" fill="none"/>
<path d="M411.3 366.7 L405.7 367.3 L410.9 369.5Z" fill="#cad70c" stroke="#cad70c" stroke-width="0.6"/>
<path d="M391 418.1 L396.1 419.8" stroke="#c9d80d" stroke-width="1" fill="none"/>
<path d="M393.6 420.5 L396.1 419.8 L394.5 417.8Z" fill="#c9d80d" stroke="#c9d80d" stroke-width="0.6"/>
<path d="M462.8 412.9 L460.8 399.8" stroke="#a8de0e" stroke-width="1" fill="none"/>
<path d="M463 404.8 L460.8 399.8 L460.2 405.3Z" fill="#a8de0e" stroke="#a8de0e" stroke-width="0.6"/>
<path d="M441 371.8 L428.9 366.8" stroke="#8ee10c" stroke-width="1" fill="none"/>
<path d="M434.3 367.5 L428.9 366.8 L433.2 370.1Z" fill="#8ee10c" stroke="#8ee10c" stroke-width="0.6"/>
<path d="M398 421 L403 418.3" stroke="#82e20b" stroke-width="1" fill="none"/>
<path d="M401.6 420.6 L403 418.3 L400.3 418.1Z" fill="#82e20b" stroke="#82e20b" stroke-width="0.6"/>
<path d="M465.6 391.4 L458.4 380.6" stroke="#7de30b" stroke-width="1" fill="none"/>
<path d="M462.4 384.2 L458.4 380.6 L460.1 385.7Z" fill="#7de30b" stroke="#7de30b" stroke-width="0.6"/>
<path d="M393.4 398.6 L383.1 399.9" stroke="#79e30a" stroke-width="1" fill="none"/>
<path d="M387.1 398 L383.1 399.9 L387.4 400.8Z" fill="#79e30a" stroke="#79e30a" stroke-width="0.6"/>
<path d="M404.5 378.2 L391.6 377.7" stroke="#66e509" stroke-width="1" fill="none"/>
<path d="M396.8 376.5 L391.6 377.7 L396.7 379.3Z" fill="#66e509" stroke="#66e509" stroke-width="0.6"/>
<path d="M393.8 391.8 L381.3 392.8" stroke="#39ea05" stroke-width="1" fill="none"/>
<path d="M386.2 391 L381.3 392.8 L386.4 393.8Z" fill="#39ea05" stroke="#39ea05" stroke-width="0.6"/>
<path d="M396.4 410.3 L390.5 411.6" stroke="#22ec03" stroke-width="1" fill="none"/>
<path d="M392.5 409.7 L390.5 411.6 L393.1 412.5Z" fill="#22ec03" stroke="#22ec03" stroke-width="0.6"/>
<path d="M449.5 419.7 L450.6 407.7" stroke="#02ef04" stroke-width="1" fill="none"/>
<path d="M451.6 412.7 L450.6 407.7 L448.8 412.4Z" fill="#02ef04" stroke="#02ef04" stroke-width="0.6"/>
<path d="M412.4 421.7 L418 417.9" stroke="#03ee07" stroke-width="1" fill="none"/>
<path d="M416.6 420.5 L418 417.9 L415 418.2Z" fill="#03ee07" stroke="#03ee07" stroke-width="0.6"/>
<path d="M436.9 422.4 L440.5 413.2" stroke="#05ed0c" stroke-width="1" fill="none"/>
<path d="M440.4 417.4 L440.5 413.2 L437.7 416.4Z" fill="#05ed0c" stroke="#05ed0c" stroke-width="0.6"/>
<path d="M462.5 401.4 L458.2 390.5" stroke="#06ec0f" stroke-width="1" fill="none"/>
<path d="M461.2 394.3 L458.2 390.5 L458.6 395.4Z" fill="#06ec0f" stroke="#06ec0f" stroke-width="0.6"/>
<path d="M441.1 380.2 L431 374.9" stroke="#0aea19" stroke-width="1" fill="none"/>
<path d="M435.7 375.8 L431 374.9 L434.4 378.2Z" fill="#0aea19" stroke="#0aea19" stroke-width="0.6"/>
<path d="M450.2 382.3 L441.4 375.2" stroke="#0ce91d" stroke-width="1" fill="none"/>
<path d="M445.8 376.9 L441.4 375.2 L444.1 379.1Z" fill="#0ce91d" stroke="#0ce91d" stroke-width="0.6"/>
<path d="M405.5 409.8 L401.3 410.4" stroke="#0fe725" stroke-width="1" fill="none"/>
<path d="M402.8 408.7 L401.3 410.4 L403.2 411.5Z" fill="#0fe725" stroke="#0fe725" stroke-width="0.6"/>
<path d="M415.3 380.8 L404.5 379.8" stroke="#10e53c" stroke-width="1" fill="none"/>
<path d="M409 378.9 L404.5 379.8 L408.7 381.6Z" fill="#10e53c" stroke="#10e53c" stroke-width="0.6"/>
<path d="M402.5 397.2 L394.9 398.1" stroke="#10e53f" stroke-width="1" fill="none"/>
<path d="M397.8 396.4 L394.9 398.1 L398.1 399.1Z" fill="#10e53f" stroke="#10e53f" stroke-width="0.6"/>
<path d="M422.2 420.4 L427.1 416" stroke="#10e449" stroke-width="1" fill="none"/>
<path d="M426.1 418.8 L427.1 416 L424.2 416.7Z" fill="#10e449" stroke="#10e449" stroke-width="0.6"/>
<path d="M451.5 392.8 L445.1 384.3" stroke="#10e35b" stroke-width="1" fill="none"/>
<path d="M448.8 386.8 L445.1 384.3 L446.5 388.5Z" fill="#10e35b" stroke="#10e35b" stroke-width="0.6"/>
<path d="M451.7 409.3 L450.3 399" stroke="#10e171" stroke-width="1" fill="none"/>
<path d="M452.2 402.9 L450.3 399 L449.5 403.3Z" fill="#10e171" stroke="#10e171" stroke-width="0.6"/>
<path d="M429.2 380.6 L419.5 378.4" stroke="#10deab" stroke-width="1" fill="none"/>
<path d="M423.7 377.9 L419.5 378.4 L423.1 380.7Z" fill="#10deab" stroke="#10deab" stroke-width="0.6"/>
<path d="M452.9 400.3 L449.1 391.1" stroke="#10deb0" stroke-width="1" fill="none"/>
<path d="M451.9 394.3 L449.1 391.1 L449.3 395.4Z" fill="#10deb0" stroke="#10deb0" stroke-width="0.6"/>
<path d="M408.3 388.8 L399.3 388.8" stroke="#10ddb1" stroke-width="1" fill="none"/>
<path d="M402.9 387.4 L399.3 388.8 L402.9 390.2Z" fill="#10ddb1" stroke="#10ddb1" stroke-width="0.6"/>
<path d="M412 408.6 L415.1 406.8" stroke="#10cbcf" stroke-width="1" fill="none"/>
<path d="M414.6 408.7 L415.1 406.8 L413.2 406.3Z" fill="#10cbcf" stroke="#10cbcf" stroke-width="0.6"/>
<path d="M439 411.2 L439.9 404.3" stroke="#10b6d7" stroke-width="1" fill="none"/>
<path d="M440.9 407.3 L439.9 404.3 L438.1 406.9Z" fill="#10b6d7" stroke="#10b6d7" stroke-width="0.6"/>
<path d="M441.6 390.5 L435.5 384.9" stroke="#10a8dd" stroke-width="1" fill="none"/>
<path d="M438.9 386.1 L435.5 384.9 L437 388.2Z" fill="#10a8dd" stroke="#10a8dd" stroke-width="0.6"/>
<path d="M415.4 388.7 L408.4 388.4" stroke="#109de1" stroke-width="1" fill="none"/>
<path d="M411.2 387.2 L408.4 388.4 L411.1 390Z" fill="#109de1" stroke="#109de1" stroke-width="0.6"/>
<path d="M428.2 388 L421.7 386.6" stroke="#1098e2" stroke-width="1" fill="none"/>
<path d="M424.6 385.8 L421.7 386.6 L424 388.6Z" fill="#1098e2" stroke="#1098e2" stroke-width="0.6"/>
<path d="M423.1 410 L426.2 407.2" stroke="#1098e2" stroke-width="1" fill="none"/>
<path d="M425.9 409.4 L426.2 407.2 L424 407.3Z" fill="#1098e2" stroke="#1098e2" stroke-width="0.6"/>
<path d="M414.2 397.5 L410 398.1" stroke="#1089e6" stroke-width="1" fill="none"/>
<path d="M411.5 396.5 L410 398.1 L411.9 399.2Z" fill="#1089e6" stroke="#1089e6" stroke-width="0.6"/>
<path d="M437.7 397.9 L435.2 393.2" stroke="#1074eb" stroke-width="1" fill="none"/>
<path d="M437.4 394.4 L435.2 393.2 L434.9 395.7Z" fill="#1074eb" stroke="#1074eb" stroke-width="0.6"/>
<path d="M423.4 400.4 L425.2 399.3" stroke="#0a28ed" stroke-width="1" fill="none"/>
<path d="M425.3 400.9 L425.2 399.3 L423.7 398.6Z" fill="#0a28ed" stroke="#0a28ed" stroke-width="0.6"/>
<path d="M512.1 472.4 L504.9 445.1" stroke="#ff660d" stroke-width="1" fill="none"/>
<path d="M509.7 457 L504.9 445.1 L506.6 457.8Z" fill="#ff660d" stroke="#ff660d" stroke-width="0.6"/>
<path d="M507.5 483 L500 454.1" stroke="#ff4d0b" stroke-width="1" fill="none"/>
<path d="M504.9 466.7 L500 454.1 L501.8 467.5Z" fill="#ff4d0b" stroke="#ff4d0b" stroke-width="0.6"/>
<path d="M493.2 425.4 L478.3 394.6" stroke="#ff460a" stroke-width="1" fill="none"/>
<path d="M486.5 407.8 L478.3 394.6 L483.6 409.1Z" fill="#ff460a" stroke="#ff460a" stroke-width="0.6"/>
<path d="M509.1 412.7 L495.7 384.8" stroke="#ff2900" stroke-width="1" fill="none"/>
<path d="M503.2 396.7 L495.7 384.8 L500.3 398Z" fill="#ff2900" stroke="#ff2900" stroke-width="0.6"/>
<path d="M510.5 482.6 L500.3 443.9" stroke="#ff3804" stroke-width="1" fill="none"/>
<path d="M506.4 460.9 L500.3 443.9 L503.3 461.8Z" fill="#ff3804" stroke="#ff3804" stroke-width="0.6"/>
<path d="M514.4 480.8 L506.4 450.3" stroke="#ff2f00" stroke-width="1" fill="none"/>
<path d="M511.6 463.6 L506.4 450.3 L508.5 464.4Z" fill="#ff2f00" stroke="#ff2f00" stroke-width="0.6"/>
<path d="M513.2 464.1 L504.1 429.4" stroke="#ff3c05" stroke-width="1" fill="none"/>
<path d="M509.7 444.6 L504.1 429.4 L506.6 445.4Z" fill="#ff3c05" stroke="#ff3c05" stroke-width="0.6"/>
<path d="M508.3 477.6 L500.1 446.5" stroke="#ff560c" stroke-width="1" fill="none"/>
<path d="M505.3 460.1 L500.1 446.5 L502.2 460.9Z" fill="#ff560c" stroke="#ff560c" stroke-width="0.6"/>
<path d="M499.7 421.5 L483.7 388.8" stroke="#ff6f0e" stroke-width="1" fill="none"/>
<path d="M492.3 402.8 L483.7 388.8 L489.5 404.2Z" fill="#ff6f0e" stroke="#ff6f0e" stroke-width="0.6"/>
<path d="M500.2 422.5 L483.8 388.5" stroke="#ff460a" stroke-width="1" fill="none"/>
<path d="M492.6 403.1 L483.8 388.5 L489.7 404.5Z" fill="#ff460a" stroke="#ff460a" stroke-width="0.6"/>
<path d="M493.5 472.5 L484.2 437.3" stroke="#ff550c" stroke-width="1" fill="none"/>
<path d="M489.9 452.7 L484.2 437.3 L486.8 453.5Z" fill="#ff550c" stroke="#ff550c" stroke-width="0.6"/>
<path d="M518 452.4 L508.5 419" stroke="#ff3402" stroke-width="1" fill="none"/>
<path d="M514.3 433.6 L508.5 419 L511.2 434.5Z" fill="#ff3402" stroke="#ff3402" stroke-width="0.6"/>
<path d="M526 439.5 L512.8 402.3" stroke="#ff4409" stroke-width="1" fill="none"/>
<path d="M520.2 418.6 L512.8 402.3 L517.2 419.6Z" fill="#ff4409" stroke="#ff4409" stroke-width="0.6"/>
<path d="M498.2 461 L487.9 422.1" stroke="#ff690e" stroke-width="1" fill="none"/>
<path d="M494.1 439.2 L487.9 422.1 L491 440Z" fill="#ff690e" stroke="#ff690e" stroke-width="0.6"/>
<path d="M500.4 480.8 L491 444.8" stroke="#ff3b05" stroke-width="1" fill="none"/>
<path d="M496.8 460.6 L491 444.8 L493.7 461.4Z" fill="#ff3b05" stroke="#ff3b05" stroke-width="0.6"/>
<path d="M525.7 447.2 L513.1 408.2" stroke="#ff4a0a" stroke-width="1" fill="none"/>
<path d="M520.3 425.3 L513.1 408.2 L517.2 426.2Z" fill="#ff4a0a" stroke="#ff4a0a" stroke-width="0.6"/>
<path d="M507.4 457.8 L498.6 424.3" stroke="#ff3f07" stroke-width="1" fill="none"/>
<path d="M504.1 439 L498.6 424.3 L501 439.8Z" fill="#ff3f07" stroke="#ff3f07" stroke-width="0.6"/>
<path d="M512.5 443.9 L502.6 413.7" stroke="#ff3b05" stroke-width="1" fill="none"/>
<path d="M508.6 426.8 L502.6 413.7 L505.5 427.8Z" fill="#ff3b05" stroke="#ff3b05" stroke-width="0.6"/>
<path d="M510.4 446.7 L496.4 406.2" stroke="#ff480a" stroke-width="1" fill="none"/>
<path d="M504.2 423.9 L496.4 406.2 L501.2 424.9Z" fill="#ff480a" stroke="#ff480a" stroke-width="0.6"/>
<path d="M516.8 428.1 L502.6 393.9" stroke="#ff3d06" stroke-width="1" fill="none"/>
<path d="M510.5 408.7 L502.6 393.9 L507.5 409.9Z" fill="#ff3d06" stroke="#ff3d06" stroke-width="0.6"/>
<path d="M507.5 431.9 L491.9 395.3" stroke="#ff3502" stroke-width="1" fill="none"/>
<path d="M500.4 411.1 L491.9 395.3 L497.5 412.4Z" fill="#ff3502" stroke="#ff3502" stroke-width="0.6"/>
<path d="M504.7 469.4 L496.2 437.1" stroke="#ff670d" stroke-width="1" fill="none"/>
<path d="M501.6 451.2 L496.2 437.1 L498.5 452Z" fill="#ff670d" stroke="#ff670d" stroke-width="0.6"/>
<path d="M516.2 451.7 L508.6 424" stroke="#ff3703" stroke-width="1" fill="none"/>
<path d="M513.6 436 L508.6 424 L510.5 436.9Z" fill="#ff3703" stroke="#ff3703" stroke-width="0.6"/>
<path d="M523 464.8 L515.7 436.8" stroke="#ff3603" stroke-width="1" fill="none"/>
<path d="M520.5 449 L515.7 436.8 L517.4 449.8Z" fill="#ff3603" stroke="#ff3603" stroke-width="0.6"/>
<path d="M495.4 442.5 L478.5 401.2" stroke="#fa8a10" stroke-width="1" fill="none"/>
<path d="M487.6 419.2 L478.5 401.2 L484.7 420.4Z" fill="#fa8a10" stroke="#fa8a10" stroke-width="0.6"/>
<path d="M518.9 461.2 L507.5 418.3" stroke="#ff3603" stroke-width="1" fill="none"/>
<path d="M514.2 437.2 L507.5 418.3 L511.1 438.1Z" fill="#ff3603" stroke="#ff3603" stroke-width="0.6"/>
<path d="M517 459.7 L506.7 420.5" stroke="#ff3d06" stroke-width="1" fill="none"/>
<path d="M512.9 437.7 L506.7 420.5 L509.8 438.5Z" fill="#ff3d06" stroke="#ff3d06" stroke-width="0.6"/>
<path d="M519.1 458 L508.7 419.4" stroke="#ff4f0b" stroke-width="1" fill="none"/>
<path d="M514.9 436.3 L508.7 419.4 L511.9 437.2Z" fill="#ff4f0b" stroke="#ff4f0b" stroke-width="0.6"/>
<path d="M519.5 440.8 L509.5 411.2" stroke="#ff510b" stroke-width="1" fill="none"/>
<path d="M515.5 424 L509.5 411.2 L512.5 425Z" fill="#ff510b" stroke="#ff510b" stroke-width="0.6"/>
<path d="M499.4 411.2 L480.6 376.1" stroke="#ff2a00" stroke-width="1" fill="none"/>
<path d="M490.5 391.1 L480.6 376.1 L487.6 392.6Z" fill="#ff2a00" stroke="#ff2a00" stroke-width="0.6"/>
<path d="M520 435.4 L506.5 399.7" stroke="#ff3000" stroke-width="1" fill="none"/>
<path d="M514.1 415.2 L506.5 399.7 L511.1 416.4Z" fill="#ff3000" stroke="#ff3000" stroke-width="0.6"/>
<path d="M500.1 431 L486.8 400" stroke="#ff600d" stroke-width="1" fill="none"/>
<path d="M494.3 413.3 L486.8 400 L491.3 414.6Z" fill="#ff600d" stroke="#ff600d" stroke-width="0.6"/>
<path d="M514.8 438.1 L505.3 410.8" stroke="#ff3101" stroke-width="1" fill="none"/>
<path d="M511.1 422.6 L505.3 410.8 L508 423.6Z" fill="#ff3101" stroke="#ff3101" stroke-width="0.6"/>
<path d="M499.2 457.8 L487.5 416.8" stroke="#f98c10" stroke-width="1" fill="none"/>
<path d="M494.3 434.8 L487.5 416.8 L491.2 435.7Z" fill="#f98c10" stroke="#f98c10" stroke-width="0.6"/>
<path d="M525.2 450.1 L517.6 422.9" stroke="#ff3804" stroke-width="1" fill="none"/>
<path d="M522.6 434.7 L517.6 422.9 L519.5 435.5Z" fill="#ff3804" stroke="#ff3804" stroke-width="0.6"/>
<path d="M515 442.7 L499.2 399.9" stroke="#ff3301" stroke-width="1" fill="none"/>
<path d="M507.8 418.6 L499.2 399.9 L504.8 419.7Z" fill="#ff3301" stroke="#ff3301" stroke-width="0.6"/>
<path d="M510.2 448.4 L497.9 410.7" stroke="#ff730f" stroke-width="1" fill="none"/>
<path d="M504.9 427.2 L497.9 410.7 L501.9 428.2Z" fill="#ff730f" stroke="#ff730f" stroke-width="0.6"/>
<path d="M493.1 427.9 L481.6 402.3" stroke="#fa8b10" stroke-width="1" fill="none"/>
<path d="M488.2 413.1 L481.6 402.3 L485.3 414.4Z" fill="#fa8b10" stroke="#fa8b10" stroke-width="0.6"/>
<path d="M499.5 459.1 L492 430.4" stroke="#ff4309" stroke-width="1" fill="none"/>
<path d="M496.9 442.9 L492 430.4 L493.8 443.7Z" fill="#ff4309" stroke="#ff4309" stroke-width="0.6"/>
<path d="M497.4 476.4 L487 436.8" stroke="#f98c10" stroke-width="1" fill="none"/>
<path d="M493.3 454.2 L487 436.8 L490.2 455Z" fill="#f98c10" stroke="#f98c10" stroke-width="0.6"/>
<path d="M510.1 421.5 L498.5 395" stroke="#ff4c0b" stroke-width="1" fill="none"/>
<path d="M505.1 406.3 L498.5 395 L502.2 407.6Z" fill="#ff4c0b" stroke="#ff4c0b" stroke-width="0.6"/>
<path d="M518 474.4 L507.5 434.7" stroke="#ff3101" stroke-width="1" fill="none"/>
<path d="M513.8 452.2 L507.5 434.7 L510.7 453Z" fill="#ff3101" stroke="#ff3101" stroke-width="0.6"/>
<path d="M499.1 415.5 L482.6 383.2" stroke="#ff3a04" stroke-width="1" fill="none"/>
<path d="M491.4 397 L482.6 383.2 L488.6 398.5Z" fill="#ff3a04" stroke="#ff3a04" stroke-width="0.6"/>
<path d="M498.7 481.7 L488.3 442.1" stroke="#ff3e07" stroke-width="1" fill="none"/>
<path d="M494.6 459.5 L488.3 442.1 L491.5 460.3Z" fill="#ff3e07" stroke="#ff3e07" stroke-width="0.6"/>
<path d="M483.7 427.3 L463.2 389.8" stroke="#ff660d" stroke-width="1" fill="none"/>
<path d="M473.8 405.9 L463.2 389.8 L471 407.4Z" fill="#ff660d" stroke="#ff660d" stroke-width="0.6"/>
<path d="M490.8 419.1 L476.6 391.6" stroke="#ff4509" stroke-width="1" fill="none"/>
<path d="M484.4 403.2 L476.6 391.6 L481.6 404.7Z" fill="#ff4509" stroke="#ff4509" stroke-width="0.6"/>
<path d="M466.1 405.8 L474.8 425.1" stroke="#f0a910" stroke-width="1" fill="none"/>
<path d="M470.8 418.8 L474.8 425.1 L472.8 417.9Z" fill="#f0a910" stroke="#f0a910" stroke-width="0.6"/>
<path d="M451.7 405.2 L458.4 421.9" stroke="#ecbb0c" stroke-width="1" fill="none"/>
<path d="M455 416.5 L458.4 421.9 L457.1 415.6Z" fill="#ecbb0c" stroke="#ecbb0c" stroke-width="0.6"/>
<path d="M462 399.2 L472.1 421.9" stroke="#f0a410" stroke-width="1" fill="none"/>
<path d="M467.6 414.4 L472.1 421.9 L469.6 413.5Z" fill="#f0a410" stroke="#f0a410" stroke-width="0.6"/>
<path d="M441.4 397.8 L451.8 425.1" stroke="#efc503" stroke-width="1" fill="none"/>
<path d="M447.1 415.9 L451.8 425.1 L449.2 415.1Z" fill="#efc503" stroke="#efc503" stroke-width="0.6"/>
<path d="M463 411 L469.8 426.4" stroke="#f0ae10" stroke-width="1" fill="none"/>
<path d="M466.4 421.4 L469.8 426.4 L468.4 420.5Z" fill="#f0ae10" stroke="#f0ae10" stroke-width="0.6"/>
<path d="M472.2 414.8 L481 433.5" stroke="#ff730f" stroke-width="1" fill="none"/>
<path d="M476.9 427.4 L481 433.5 L478.9 426.5Z" fill="#ff730f" stroke="#ff730f" stroke-width="0.6"/>
<path d="M452.1 423.8 L461.4 446.4" stroke="#eeb70e" stroke-width="1" fill="none"/>
<path d="M457.1 438.9 L461.4 446.4 L459.1 438.1Z" fill="#eeb70e" stroke="#eeb70e" stroke-width="0.6"/>
<path d="M437 403.1 L444.3 423.1" stroke="#decf06" stroke-width="1" fill="none"/>
<path d="M440.7 416.5 L444.3 423.1 L442.8 415.8Z" fill="#decf06" stroke="#decf06" stroke-width="0.6"/>
<path d="M455.7 407.5 L466.3 432.6" stroke="#f0ae10" stroke-width="1" fill="none"/>
<path d="M461.6 424.3 L466.3 432.6 L463.6 423.4Z" fill="#f0ae10" stroke="#f0ae10" stroke-width="0.6"/>
<path d="M435.6 385.8 L443 406.4" stroke="#89e20c" stroke-width="1" fill="none"/>
<path d="M439.4 399.5 L443 406.4 L441.4 398.8Z" fill="#89e20c" stroke="#89e20c" stroke-width="0.6"/>
<path d="M452.5 421 L458.8 436.3" stroke="#eeb80d" stroke-width="1" fill="none"/>
<path d="M455.6 431.4 L458.8 436.3 L457.6 430.5Z" fill="#eeb80d" stroke="#eeb80d" stroke-width="0.6"/>
<path d="M464.1 417.5 L473.9 439.4" stroke="#f49710" stroke-width="1" fill="none"/>
<path d="M469.5 432.2 L473.9 439.4 L471.5 431.3Z" fill="#f49710" stroke="#f49710" stroke-width="0.6"/>
<path d="M434.5 418 L443.1 442.1" stroke="#cdd60b" stroke-width="1" fill="none"/>
<path d="M439 434 L443.1 442.1 L441.1 433.3Z" fill="#cdd60b" stroke="#cdd60b" stroke-width="0.6"/>
<path d="M468.4 399.1 L478.3 420.7" stroke="#f0a110" stroke-width="1" fill="none"/>
<path d="M473.8 413.6 L478.3 420.7 L475.8 412.7Z" fill="#f0a110" stroke="#f0a110" stroke-width="0.6"/>
<path d="M461.2 390.7 L472.9 417.3" stroke="#f0a210" stroke-width="1" fill="none"/>
<path d="M467.8 408.4 L472.9 417.3 L469.8 407.6Z" fill="#f0a210" stroke="#f0a210" stroke-width="0.6"/>
<path d="M432.9 409.7 L440.4 430.9" stroke="#a4df0e" stroke-width="1" fill="none"/>
<path d="M436.7 423.8 L440.4 430.9 L438.8 423.1Z" fill="#a4df0e" stroke="#a4df0e" stroke-width="0.6"/>
<path d="M430.7 393.4 L439.6 419" stroke="#8fe10c" stroke-width="1" fill="none"/>
<path d="M435.5 410.4 L439.6 419 L437.5 409.7Z" fill="#8fe10c" stroke="#8fe10c" stroke-width="0.6"/>
<path d="M444 387 L453.7 412" stroke="#edc206" stroke-width="1" fill="none"/>
<path d="M449.3 403.7 L453.7 412 L451.3 402.9Z" fill="#edc206" stroke="#edc206" stroke-width="0.6"/>
<path d="M431.9 405.8 L441.3 432.6" stroke="#c4da0e" stroke-width="1" fill="none"/>
<path d="M437 423.6 L441.3 432.6 L439 422.8Z" fill="#c4da0e" stroke="#c4da0e" stroke-width="0.6"/>
<path d="M448.7 406.4 L455.6 423.7" stroke="#ecc008" stroke-width="1" fill="none"/>
<path d="M452.2 418.1 L455.6 423.7 L454.2 417.3Z" fill="#ecc008" stroke="#ecc008" stroke-width="0.6"/>
<path d="M430.9 393.3 L437.8 413.2" stroke="#71e40a" stroke-width="1" fill="none"/>
<path d="M434.4 406.6 L437.8 413.2 L436.5 405.9Z" fill="#71e40a" stroke="#71e40a" stroke-width="0.6"/>
<path d="M451.1 403.7 L457.9 420.5" stroke="#ebbe0a" stroke-width="1" fill="none"/>
<path d="M454.5 415 L457.9 420.5 L456.5 414.2Z" fill="#ebbe0a" stroke="#ebbe0a" stroke-width="0.6"/>
<path d="M423.7 427.6 L429.1 444.2" stroke="#0de821" stroke-width="1" fill="none"/>
<path d="M426.2 438.7 L429.1 444.2 L428.3 438Z" fill="#0de821" stroke="#0de821" stroke-width="0.6"/>
<path d="M453.5 416.2 L462.8 438.7" stroke="#ebbe0a" stroke-width="1" fill="none"/>
<path d="M458.6 431.3 L462.8 438.7 L460.6 430.4Z" fill="#ebbe0a" stroke="#ebbe0a" stroke-width="0.6"/>
<path d="M439.8 409.1 L445.5 424.5" stroke="#a5df0e" stroke-width="1" fill="none"/>
<path d="M442.5 419.5 L445.5 424.5 L444.5 418.7Z" fill="#a5df0e" stroke="#a5df0e" stroke-width="0.6"/>
<path d="M472.4 419.8 L482.6 441.5" stroke="#fe8210" stroke-width="1" fill="none"/>
<path d="M478 434.4 L482.6 441.5 L480 433.4Z" fill="#fe8210" stroke="#fe8210" stroke-width="0.6"/>
<path d="M433.2 413.4 L443 440.9" stroke="#90e10c" stroke-width="1" fill="none"/>
<path d="M438.6 431.7 L443 440.9 L440.6 430.9Z" fill="#90e10c" stroke="#90e10c" stroke-width="0.6"/>
<path d="M461.5 419.8 L469.3 437.7" stroke="#f0a110" stroke-width="1" fill="none"/>
<path d="M465.6 431.9 L469.3 437.7 L467.6 431Z" fill="#f0a110" stroke="#f0a110" stroke-width="0.6"/>
<path d="M423.4 395.9 L428.7 412.2" stroke="#10e537" stroke-width="1" fill="none"/>
<path d="M425.8 406.8 L428.7 412.2 L427.9 406.2Z" fill="#10e537" stroke="#10e537" stroke-width="0.6"/>
<path d="M423.3 407.6 L430.2 429" stroke="#03ee08" stroke-width="1" fill="none"/>
<path d="M426.7 421.8 L430.2 429 L428.8 421.2Z" fill="#03ee08" stroke="#03ee08" stroke-width="0.6"/>
<path d="M470 421.3 L480.3 443.4" stroke="#f29b10" stroke-width="1" fill="none"/>
<path d="M475.7 436.2 L480.3 443.4 L477.7 435.2Z" fill="#f29b10" stroke="#f29b10" stroke-width="0.6"/>
<path d="M442 391.6 L448.9 410" stroke="#eec503" stroke-width="1" fill="none"/>
<path d="M445.5 403.9 L448.9 410 L447.5 403.2Z" fill="#eec503" stroke="#eec503" stroke-width="0.6"/>
<path d="M449.7 409.9 L459.2 433.4" stroke="#eeb90d" stroke-width="1" fill="none"/>
<path d="M454.9 425.6 L459.2 433.4 L456.9 424.7Z" fill="#eeb90d" stroke="#eeb90d" stroke-width="0.6"/>
<path d="M440 400.1 L450.4 427.7" stroke="#d1d50a" stroke-width="1" fill="none"/>
<path d="M445.8 418.5 L450.4 427.7 L447.8 417.7Z" fill="#d1d50a" stroke="#d1d50a" stroke-width="0.6"/>
<path d="M428 438.9 L434.8 451.4" stroke="#0ce91d" stroke-width="1" fill="none"/>
<path d="M426.7 453.6 L436 470.7" stroke="#02ef05" stroke-width="1" fill="none"/>
<path d="M426.1 465.1 L434.9 481.2" stroke="#05ed0d" stroke-width="1" fill="none"/>
<path d="M433.3 438.7 L440.4 451.8" stroke="#04ee09" stroke-width="1" fill="none"/>
<path d="M433.2 453.2 L440.8 467.1" stroke="#06ec0f" stroke-width="1" fill="none"/>
<path d="M432.8 462.9 L440.5 477" stroke="#0ce91d" stroke-width="1" fill="none"/>
<path d="M436.8 440.9 L444.1 454.1" stroke="#0ce91e" stroke-width="1" fill="none"/>
<path d="M436.9 453.7 L443.6 466.1" stroke="#04ed0a" stroke-width="1" fill="none"/>
<path d="M437 463.1 L446.4 480.4" stroke="#0ce81e" stroke-width="1" fill="none"/>
<path d="M443.8 443 L453 460" stroke="#0de822" stroke-width="1" fill="none"/>
<path d="M442.8 451.9 L452.2 469.1" stroke="#02ef05" stroke-width="1" fill="none"/>
<path d="M443.2 465.3 L450.9 479.4" stroke="#02ee06" stroke-width="1" fill="none"/>
<path d="M448.2 442.5 L455.3 455.6" stroke="#0ce81e" stroke-width="1" fill="none"/>
<path d="M447.3 454.9 L455.6 470.1" stroke="#0de822" stroke-width="1" fill="none"/>
<path d="M448.9 465.1 L456.8 479.6" stroke="#0de821" stroke-width="1" fill="none"/>
<path d="M453 443.9 L460.7 457.9" stroke="#0de821" stroke-width="1" fill="none"/>
<path d="M453.5 453.8 L462.8 470.9" stroke="#0ee723" stroke-width="1" fill="none"/>
<path d="M454.5 464.7 L463.8 481.8" stroke="#05ed0c" stroke-width="1" fill="none"/>
<path d="M458.2 442.9 L465.8 456.7" stroke="#0ce91d" stroke-width="1" fill="none"/>
<path d="M458.2 454.5 L467.8 472" stroke="#05ef00" stroke-width="1" fill="none"/>
<path d="M459.7 465.4 L467.2 479.2" stroke="#01ef03" stroke-width="1" fill="none"/>
<path d="M489.7 463.3 L472.6 473.8" stroke="#ff3904" stroke-width="1" fill="none"/>
<path d="M479.4 467.7 L472.6 473.8 L481.1 470.4Z" fill="#ff3904" stroke="#ff3904" stroke-width="0.6"/>
<path d="M484 473.6 L467 484" stroke="#ff780f" stroke-width="1" fill="none"/>
<path d="M473.8 477.9 L467 484 L475.5 480.6Z" fill="#ff780f" stroke="#ff780f" stroke-width="0.6"/>
<path d="M478 480.9 L456.6 494.1" stroke="#ff740f" stroke-width="1" fill="none"/>
<path d="M465.4 486.8 L456.6 494.1 L467.1 489.5Z" fill="#ff740f" stroke="#ff740f" stroke-width="0.6"/>
<path d="M464.6 486 L446.2 497.2" stroke="#ff4c0b" stroke-width="1" fill="none"/>
<path d="M453.7 490.8 L446.2 497.2 L455.3 493.5Z" fill="#ff4c0b" stroke="#ff4c0b" stroke-width="0.6"/>
<path d="M455.3 494.2 L436.3 498.1" stroke="#ff4309" stroke-width="1" fill="none"/>
<path d="M444.5 494.7 L436.3 498.1 L445.2 497.9Z" fill="#ff4309" stroke="#ff4309" stroke-width="0.6"/>
<path d="M444.5 490.1 L423.2 494.5" stroke="#ff490a" stroke-width="1" fill="none"/>
<path d="M432.5 491 L423.2 494.5 L433.1 494.1Z" fill="#ff490a" stroke="#ff490a" stroke-width="0.6"/>
<path d="M433.4 486.4 L410.4 491.2" stroke="#ff480a" stroke-width="1" fill="none"/>
<path d="M420.4 487.5 L410.4 491.2 L421.1 490.6Z" fill="#ff480a" stroke="#ff480a" stroke-width="0.6"/>
<path d="M412.4 476.5 L407.2 487.7" stroke="#ff720f" stroke-width="1" fill="none"/>
<path d="M408.1 482 L407.2 487.7 L411 483.3Z" fill="#ff720f" stroke="#ff720f" stroke-width="0.6"/>
<path d="M406.4 466.6 L401.2 477.7" stroke="#ff4308" stroke-width="1" fill="none"/>
<path d="M402.1 472 L401.2 477.7 L405 473.4Z" fill="#ff4308" stroke="#ff4308" stroke-width="0.6"/>
<path d="M404.3 453.2 L397.1 468.7" stroke="#ff3e06" stroke-width="1" fill="none"/>
<path d="M398.9 461.1 L397.1 468.7 L401.8 462.4Z" fill="#ff3e06" stroke="#ff3e06" stroke-width="0.6"/>
<path d="M405.5 444 L399.3 457.4" stroke="#ff3b05" stroke-width="1" fill="none"/>
<path d="M400.6 450.7 L399.3 457.4 L403.5 452.1Z" fill="#ff3b05" stroke="#ff3b05" stroke-width="0.6"/>
<path d="M408.7 431.3 L401.6 446.6" stroke="#ff740f" stroke-width="1" fill="none"/>
<path d="M403.3 439 L401.6 446.6 L406.2 440.4Z" fill="#ff740f" stroke="#ff740f" stroke-width="0.6"/>
<path d="M503.1 466.9 L486.1 477.3" stroke="#ff3d06" stroke-width="1" fill="none"/>
<path d="M492.9 471.3 L486.1 477.3 L494.6 474Z" fill="#ff3d06" stroke="#ff3d06" stroke-width="0.6"/>
<path d="M498 478.3 L479.7 489.4" stroke="#ff4007" stroke-width="1" fill="none"/>
<path d="M487.1 483 L479.7 489.4 L488.8 485.8Z" fill="#ff4007" stroke="#ff4007" stroke-width="0.6"/>
<path d="M491.7 488.3 L471.4 500.7" stroke="#ff3301" stroke-width="1" fill="none"/>
<path d="M479.7 493.8 L471.4 500.7 L481.4 496.5Z" fill="#ff3301" stroke="#ff3301" stroke-width="0.6"/>
<path d="M478.8 494.6 L461.2 505.4" stroke="#ff3703" stroke-width="1" fill="none"/>
<path d="M468.3 499.1 L461.2 505.4 L470 501.9Z" fill="#ff3703" stroke="#ff3703" stroke-width="0.6"/>
<path d="M469.9 500.5 L447.6 514.2" stroke="#ff4108" stroke-width="1" fill="none"/>
<path d="M456.8 506.7 L447.6 514.2 L458.5 509.4Z" fill="#ff4108" stroke="#ff4108" stroke-width="0.6"/>
<path d="M459.4 504.9 L434.5 510" stroke="#ff690e" stroke-width="1" fill="none"/>
<path d="M445.4 506.1 L434.5 510 L446 509.3Z" fill="#ff690e" stroke="#ff690e" stroke-width="0.6"/>
<path d="M445.3 503.6 L425.9 507.6" stroke="#ff610d" stroke-width="1" fill="none"/>
<path d="M434.3 504.3 L425.9 507.6 L435 507.4Z" fill="#ff610d" stroke="#ff610d" stroke-width="0.6"/>
<path d="M433.2 499.3 L410.3 504" stroke="#ff620d" stroke-width="1" fill="none"/>
<path d="M420.3 500.3 L410.3 504 L421 503.5Z" fill="#ff620d" stroke="#ff620d" stroke-width="0.6"/>
<path d="M424.1 495.2 L402.1 499.7" stroke="#ff3d06" stroke-width="1" fill="none"/>
<path d="M411.7 496.1 L402.1 499.7 L412.3 499.3Z" fill="#ff3d06" stroke="#ff3d06" stroke-width="0.6"/>
<path d="M403.9 484.1 L396.6 499.6" stroke="#ff610d" stroke-width="1" fill="none"/>
<path d="M398.5 491.9 L396.6 499.6 L401.4 493.3Z" fill="#ff610d" stroke="#ff610d" stroke-width="0.6"/>
<path d="M398.2 473.4 L392 486.9" stroke="#ff5f0d" stroke-width="1" fill="none"/>
<path d="M393.3 480.1 L392 486.9 L396.2 481.5Z" fill="#ff5f0d" stroke="#ff5f0d" stroke-width="0.6"/>
<path d="M392.5 464.4 L386.4 477.4" stroke="#ff5f0d" stroke-width="1" fill="none"/>
<path d="M387.7 470.9 L386.4 477.4 L390.6 472.2Z" fill="#ff5f0d" stroke="#ff5f0d" stroke-width="0.6"/>
<path d="M388.4 455.3 L383 466.9" stroke="#ff3301" stroke-width="1" fill="none"/>
<path d="M384 461 L383 466.9 L386.9 462.3Z" fill="#ff3301" stroke="#ff3301" stroke-width="0.6"/>
<path d="M388.9 440 L381.8 455.3" stroke="#ff5b0c" stroke-width="1" fill="none"/>
<path d="M383.6 447.7 L381.8 455.3 L386.5 449.1Z" fill="#ff5b0c" stroke="#ff5b0c" stroke-width="0.6"/>
<path d="M394.7 427.9 L387.5 443.3" stroke="#ff4409" stroke-width="1" fill="none"/>
<path d="M389.3 435.7 L387.5 443.3 L392.2 437.1Z" fill="#ff4409" stroke="#ff4409" stroke-width="0.6"/>
<path d="M399.9 419.3 L392.9 434.3" stroke="#ff3000" stroke-width="1" fill="none"/>
<path d="M394.6 426.9 L392.9 434.3 L397.5 428.2Z" fill="#ff3000" stroke="#ff3000" stroke-width="0.6"/>
<path d="M519.1 467.5 L492.1 484" stroke="#ff3a05" stroke-width="1" fill="none"/>
<path d="M503.4 475.2 L492.1 484 L505.1 477.9Z" fill="#ff3a05" stroke="#ff3a05" stroke-width="0.6"/>
<path d="M514.3 482.2 L488.7 497.8" stroke="#ff2700" stroke-width="1" fill="none"/>
<path d="M499.4 489.4 L488.7 497.8 L501.1 492.2Z" fill="#ff2700" stroke="#ff2700" stroke-width="0.6"/>
<path d="M507.5 488 L481 504.2" stroke="#ff1b00" stroke-width="1" fill="none"/>
<path d="M492.1 495.5 L481 504.2 L493.7 498.3Z" fill="#ff1b00" stroke="#ff1b00" stroke-width="0.6"/>
<path d="M494.3 498.3 L473.5 511" stroke="#ff3301" stroke-width="1" fill="none"/>
<path d="M482 503.9 L473.5 511 L483.7 506.7Z" fill="#ff3301" stroke="#ff3301" stroke-width="0.6"/>
<path d="M482.1 503.4 L460 517" stroke="#ff3b05" stroke-width="1" fill="none"/>
<path d="M469.1 509.5 L460 517 L470.8 512.2Z" fill="#ff3b05" stroke="#ff3b05" stroke-width="0.6"/>
<path d="M474.1 506.4 L449.1 521.6" stroke="#ff1a00" stroke-width="1" fill="none"/>
<path d="M459.5 513.4 L449.1 521.6 L461.2 516.1Z" fill="#ff1a00" stroke="#ff1a00" stroke-width="0.6"/>
<path d="M457.2 516.5 L432.9 521.5" stroke="#ff2700" stroke-width="1" fill="none"/>
<path d="M443.5 517.6 L432.9 521.5 L444.2 520.8Z" fill="#ff2700" stroke="#ff2700" stroke-width="0.6"/>
<path d="M442.4 513.6 L422.8 517.6" stroke="#ff3301" stroke-width="1" fill="none"/>
<path d="M431.3 514.2 L422.8 517.6 L432 517.4Z" fill="#ff3301" stroke="#ff3301" stroke-width="0.6"/>
<path d="M433.2 511.7 L408.6 516.7" stroke="#ff3603" stroke-width="1" fill="none"/>
<path d="M419.3 512.9 L408.6 516.7 L420 516Z" fill="#ff3603" stroke="#ff3603" stroke-width="0.6"/>
<path d="M419.9 507.3 L399.1 511.6" stroke="#ff3703" stroke-width="1" fill="none"/>
<path d="M408.1 508.1 L399.1 511.6 L408.8 511.2Z" fill="#ff3703" stroke="#ff3703" stroke-width="0.6"/>
<path d="M401 494.8 L394.3 509.1" stroke="#ff3f07" stroke-width="1" fill="none"/>
<path d="M395.9 502 L394.3 509.1 L398.8 503.4Z" fill="#ff3f07" stroke="#ff3f07" stroke-width="0.6"/>
<path d="M393.3 490.3 L387 503.9" stroke="#ff1b00" stroke-width="1" fill="none"/>
<path d="M388.4 497.1 L387 503.9 L391.3 498.4Z" fill="#ff1b00" stroke="#ff1b00" stroke-width="0.6"/>
<path d="M385.5 480.6 L380.1 492.2" stroke="#ff3703" stroke-width="1" fill="none"/>
<path d="M381.1 486.3 L380.1 492.2 L384 487.7Z" fill="#ff3703" stroke="#ff3703" stroke-width="0.6"/>
<path d="M382.4 469.1 L376.4 482.1" stroke="#ff4007" stroke-width="1" fill="none"/>
<path d="M377.7 475.5 L376.4 482.1 L380.6 476.9Z" fill="#ff4007" stroke="#ff4007" stroke-width="0.6"/>
<path d="M379 456.7 L372.6 470.5" stroke="#ff4b0a" stroke-width="1" fill="none"/>
<path d="M374.1 463.6 L372.6 470.5 L377 465Z" fill="#ff4b0a" stroke="#ff4b0a" stroke-width="0.6"/>
<path d="M377.2 442.2 L370.5 456.5" stroke="#ff3502" stroke-width="1" fill="none"/>
<path d="M372 449.4 L370.5 456.5 L374.9 450.8Z" fill="#ff3502" stroke="#ff3502" stroke-width="0.6"/>
<path d="M378.3 433.3 L371.9 447" stroke="#ff3904" stroke-width="1" fill="none"/>
<path d="M373.4 440.1 L371.9 447 L376.3 441.5Z" fill="#ff3904" stroke="#ff3904" stroke-width="0.6"/>
<path d="M384.5 421.5 L378.8 433.7" stroke="#ff3f07" stroke-width="1" fill="none"/>
<path d="M379.9 427.5 L378.8 433.7 L382.8 428.9Z" fill="#ff3f07" stroke="#ff3f07" stroke-width="0.6"/>
<path d="M390.6 411.8 L384.1 425.8" stroke="#ff3c06" stroke-width="1" fill="none"/>
<path d="M385.6 418.8 L384.1 425.8 L388.5 420.2Z" fill="#ff3c06" stroke="#ff3c06" stroke-width="0.6"/>
<path d="M529.7 471.1 L507 485" stroke="#ff3a05" stroke-width="1" fill="none"/>
<path d="M516.4 477.4 L507 485 L518.1 480.1Z" fill="#ff3a05" stroke="#ff3a05" stroke-width="0.6"/>
<path d="M520.1 483.1 L500.1 495.4" stroke="#ff0700" stroke-width="1" fill="none"/>
<path d="M508.2 488.5 L500.1 495.4 L509.9 491.2Z" fill="#ff0700" stroke="#ff0700" stroke-width="0.6"/>
<path d="M514.2 492.4 L488.4 508.2" stroke="#ff4108" stroke-width="1" fill="none"/>
<path d="M499.2 499.7 L488.4 508.2 L500.8 502.5Z" fill="#ff4108" stroke="#ff4108" stroke-width="0.6"/>
<path d="M503.8 501.1 L482.3 514.2" stroke="#ff3502" stroke-width="1" fill="none"/>
<path d="M491.1 506.9 L482.3 514.2 L492.8 509.7Z" fill="#ff3502" stroke="#ff3502" stroke-width="0.6"/>
<path d="M494.6 507.8 L467.9 524.1" stroke="#ff3b05" stroke-width="1" fill="none"/>
<path d="M479.1 515.4 L467.9 524.1 L480.7 518.1Z" fill="#ff3b05" stroke="#ff3b05" stroke-width="0.6"/>
<path d="M479.7 515.2 L459.1 527.8" stroke="#ff3703" stroke-width="1" fill="none"/>
<path d="M467.5 520.8 L459.1 527.8 L469.2 523.5Z" fill="#ff3703" stroke="#ff3703" stroke-width="0.6"/>
<path d="M469.3 524.5 L445.4 529.4" stroke="#ff1300" stroke-width="1" fill="none"/>
<path d="M455.8 525.6 L445.4 529.4 L456.5 528.7Z" fill="#ff1300" stroke="#ff1300" stroke-width="0.6"/>
<path d="M456.3 526.4 L432.9 531.2" stroke="#ff1c00" stroke-width="1" fill="none"/>
<path d="M443.1 527.5 L432.9 531.2 L443.7 530.6Z" fill="#ff1c00" stroke="#ff1c00" stroke-width="0.6"/>
<path d="M443.2 525.9 L418.7 530.9" stroke="#ff1f00" stroke-width="1" fill="none"/>
<path d="M429.4 527.1 L418.7 530.9 L430.1 530.2Z" fill="#ff1f00" stroke="#ff1f00" stroke-width="0.6"/>
<path d="M430.9 524 L407.5 528.9" stroke="#ff4309" stroke-width="1" fill="none"/>
<path d="M417.7 525.1 L407.5 528.9 L418.3 528.3Z" fill="#ff4309" stroke="#ff4309" stroke-width="0.6"/>
<path d="M415.8 516.9 L393.9 521.4" stroke="#ff0a00" stroke-width="1" fill="none"/>
<path d="M403.4 517.8 L393.9 521.4 L404 520.9Z" fill="#ff0a00" stroke="#ff0a00" stroke-width="0.6"/>
<path d="M396.5 506.8 L390 520.8" stroke="#ff1100" stroke-width="1" fill="none"/>
<path d="M391.5 513.8 L390 520.8 L394.4 515.2Z" fill="#ff1100" stroke="#ff1100" stroke-width="0.6"/>
<path d="M387.9 496.9 L381 511.6" stroke="#ff3201" stroke-width="1" fill="none"/>
<path d="M382.7 504.3 L381 511.6 L385.6 505.7Z" fill="#ff3201" stroke="#ff3201" stroke-width="0.6"/>
<path d="M379.7 488.1 L373.7 501" stroke="#ff2c00" stroke-width="1" fill="none"/>
<path d="M375 494.5 L373.7 501 L377.9 495.9Z" fill="#ff2c00" stroke="#ff2c00" stroke-width="0.6"/>
<path d="M371.6 477.4 L365.3 490.9" stroke="#ff1300" stroke-width="1" fill="none"/>
<path d="M366.7 484.2 L365.3 490.9 L369.6 485.5Z" fill="#ff1300" stroke="#ff1300" stroke-width="0.6"/>
<path d="M369.8 465 L364.4 476.6" stroke="#ff3804" stroke-width="1" fill="none"/>
<path d="M365.4 470.7 L364.4 476.6 L368.3 472.1Z" fill="#ff3804" stroke="#ff3804" stroke-width="0.6"/>
<path d="M367.1 450.2 L359.7 465.9" stroke="#ff4007" stroke-width="1" fill="none"/>
<path d="M361.6 458.2 L359.7 465.9 L364.5 459.5Z" fill="#ff4007" stroke="#ff4007" stroke-width="0.6"/>
<path d="M366.4 438.6 L359 454.6" stroke="#ff1400" stroke-width="1" fill="none"/>
<path d="M360.9 446.7 L359 454.6 L363.8 448.1Z" fill="#ff1400" stroke="#ff1400" stroke-width="0.6"/>
<path d="M370.1 429.8 L365 440.7" stroke="#ff0e00" stroke-width="1" fill="none"/>
<path d="M365.8 435.1 L365 440.7 L368.7 436.5Z" fill="#ff0e00" stroke="#ff0e00" stroke-width="0.6"/>
<path d="M375.2 416.2 L367.9 432" stroke="#ff3000" stroke-width="1" fill="none"/>
<path d="M369.7 424.2 L367.9 432 L372.6 425.6Z" fill="#ff3000" stroke="#ff3000" stroke-width="0.6"/>
<path d="M384.4 403.8 L378 417.4" stroke="#ff0600" stroke-width="1" fill="none"/>
<path d="M379.4 410.6 L378 417.4 L382.3 411.9Z" fill="#ff0600" stroke="#ff0600" stroke-width="0.6"/>
<path d="M535.1 491 L541.6 499.7" stroke="#ff0000" stroke-width="1" fill="none"/>
<path d="M547.8 491 L541.6 499.7 L541.6 508.7" stroke="#ff0000" stroke-width="1" fill="none"/>
<path d="M527 497.4 L538.8 497.4 L527.5 513.7 L537.6 514.3" stroke="#ff0000" stroke-width="1" fill="none"/>
<path d="M532.6 512 L532 532.2" stroke="#ff0000" stroke-width="1" fill="none"/>
<path d="M511 514.3 L521.9 530.6" stroke="#ff0000" stroke-width="1" fill="none"/>
<path d="M523 514.3 L511.2 531.7" stroke="#ff0000" stroke-width="1" fill="none"/>
<path d="M524.2 518.2 L530.9 531.7" stroke="#ff0000" stroke-width="1" fill="none"/>
<path d="M507.9 534.5 L514.6 534.3 L531.5 531.9" stroke="#ff0000" stroke-width="1" fill="none"/>
<!--/PLOT--></svg>
<div class="lg" style="top:41px;color:#fff">Velocity</div>
<div class="lg n" style="top:60px;color:#ff0000">1.083E+01</div>
<div class="lg n" style="top:80px;color:#ff4000">1.015E+01</div>
<div class="lg n" style="top:101px;color:#ff4610">9.462E+00</div>
<div class="lg n" style="top:121px;color:#ff8010">8.778E+00</div>
<div class="lg n" style="top:141px;color:#f0a010">8.094E+00</div>
<div class="lg n" style="top:161px;color:#f0b410">7.410E+00</div>
<div class="lg n" style="top:182px;color:#a0f010">6.727E+00</div>
<div class="lg n" style="top:202px;color:#f0c800">6.043E+00</div>
<div class="lg n" style="top:222px;color:#c0dc10">5.359E+00</div>
<div class="lg n" style="top:242px;color:#00f000">4.675E+00</div>
<div class="lg n" style="top:263px;color:#10e628">3.992E+00</div>
<div class="lg n" style="top:283px;color:#10e8c0">3.308E+00</div>
<div class="lg n" style="top:303px;color:#10aadc">2.624E+00</div>
<div class="lg n" style="top:324px;color:#1064ff">1.940E+00</div>
<div class="lg n" style="top:344px;color:#1046ff">1.256E+00</div>
<div class="lg n" style="top:364px;color:#0000ff">5.727E-01</div>
<div class="lg" style="left:637px;top:41px;color:#fff;font-size:13.6px">Probe value</div>
<div class="lg n" style="left:641px;top:60px;color:#fff">7.041E+00</div>
<div class="lg" style="left:178px;top:531px;color:#fff">Pipe Flow with Unstructured Multi-Block</div>
<div id="sb"><div class="d"></div><div class="w"></div><div class="le"></div><div class="re"></div><svg style="position:absolute;left:759px;top:6px" width="13" height="13" viewBox="0 0 13 13" shape-rendering="crispEdges"><path d="M13 0 L0 13 M13 4 L4 13 M13 8 L8 13" stroke="#fff" stroke-width="1.2" fill="none"/><path d="M13 1.5 L1.5 13 M13 5.5 L5.5 13 M13 9.5 L9.5 13" stroke="#808080" stroke-width="1.6" fill="none"/></svg><div class="t">Ready</div></div>
</body></html>
